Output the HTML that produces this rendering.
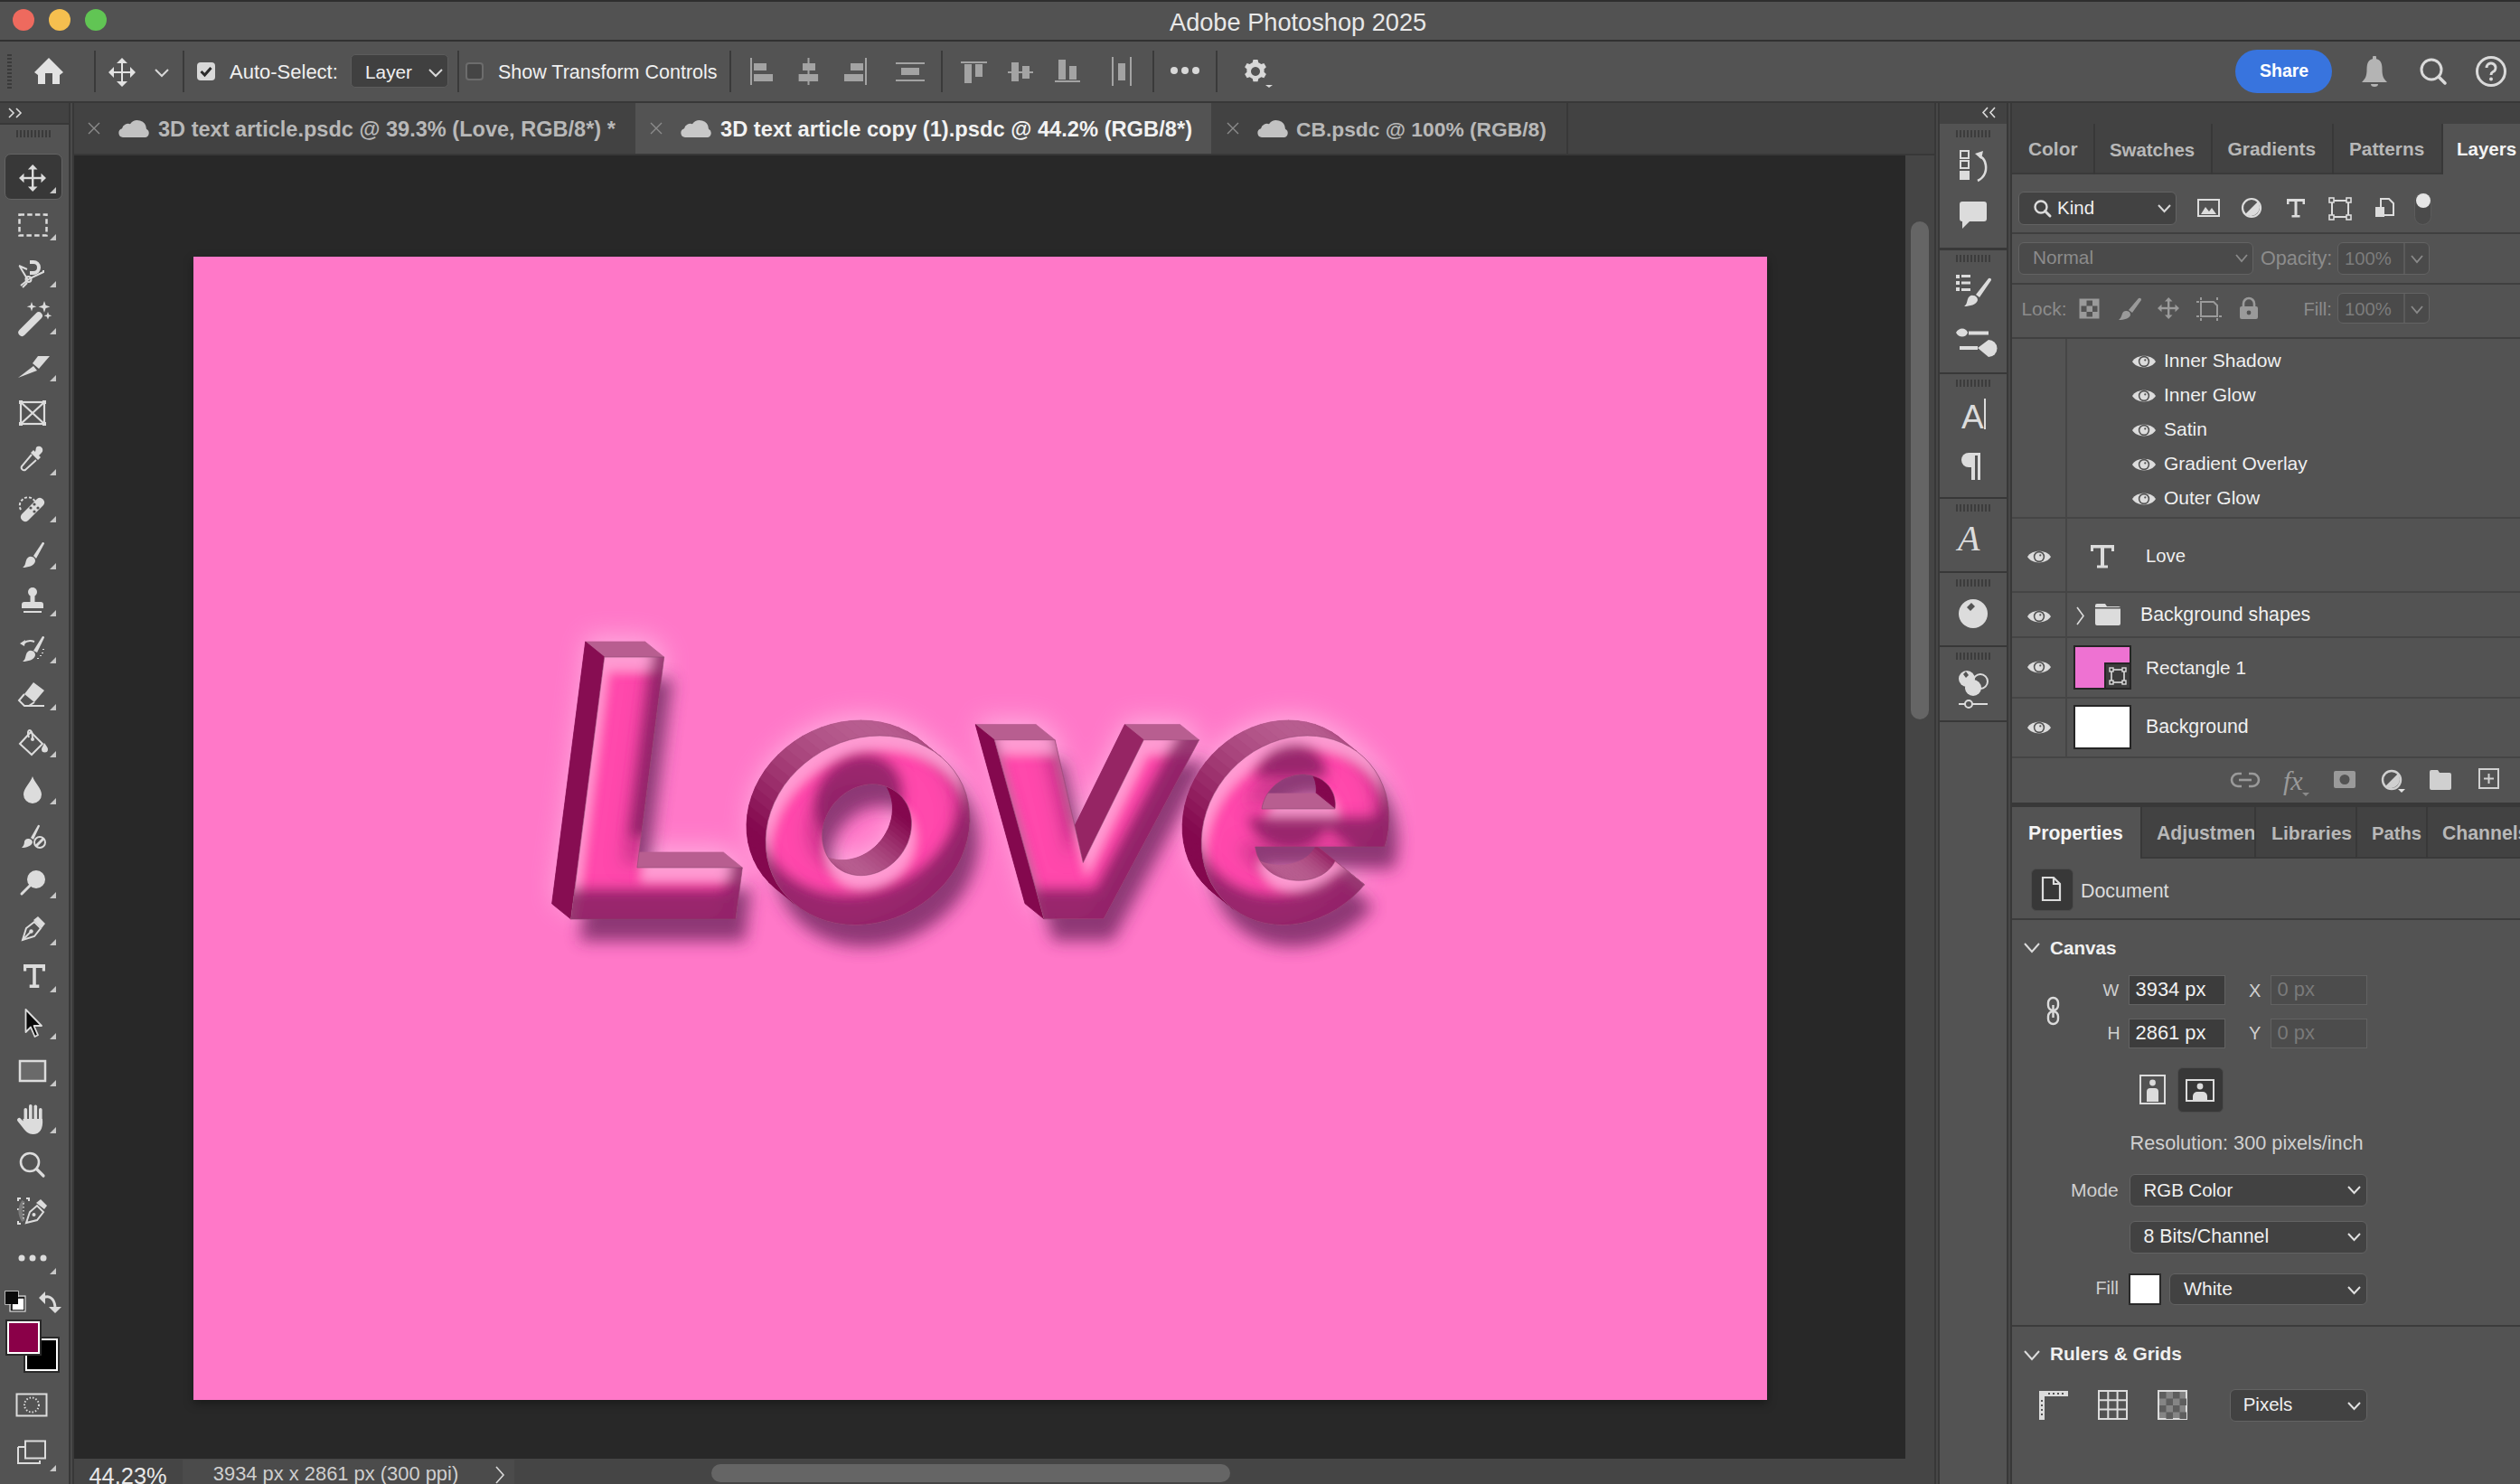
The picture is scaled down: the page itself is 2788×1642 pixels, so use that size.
<!DOCTYPE html>
<html><head><meta charset="utf-8">
<style>
*{box-sizing:border-box;margin:0;padding:0}
html,body{width:2788px;height:1642px;overflow:hidden;background:#535353;font-family:"Liberation Sans",sans-serif;color:#f0f0f0}
.a{position:absolute}
.t{position:absolute;white-space:pre;line-height:1}
svg{position:absolute;overflow:visible}
</style></head><body>
<!-- title bar -->
<div class="a" style="left:0;top:0;width:2788px;height:44px;background:#525252"></div>
<div class="a" style="left:0;top:0;width:2788px;height:2px;background:#2e2e2e"></div>
<div class="a" style="left:0;top:44px;width:2788px;height:2px;background:#313131"></div>
<!-- options bar -->
<div class="a" style="left:0;top:46px;width:2788px;height:66px;background:#535353"></div>
<div class="a" style="left:0;top:112px;width:2788px;height:2px;background:#383838"></div>
<!-- left toolbar -->
<div class="a" style="left:0;top:114px;width:76px;height:1528px;background:#535353"></div>
<div class="a" style="left:0;top:114px;width:76px;height:22px;background:#424242"></div>
<div class="a" style="left:0;top:136px;width:76px;height:2px;background:#383838"></div>
<div class="a" style="left:76px;top:114px;width:2px;height:1528px;background:#383838"></div>
<div class="a" style="left:78px;top:114px;width:2px;height:1528px;background:#4a4a4a"></div>
<div class="a" style="left:80px;top:114px;width:2px;height:1528px;background:#383838"></div>
<!-- tab bar -->
<div class="a" style="left:82px;top:114px;width:2059px;height:56px;background:#424242"></div>
<!-- canvas -->
<div class="a" style="left:82px;top:172px;width:2026px;height:1442px;background:#282828"></div>
<div class="a" style="left:214px;top:284px;width:1741px;height:1265px;background:#ff78c8;box-shadow:0 4px 10px rgba(0,0,0,.35)"></div>
<!--LOVE--><svg style="left:0;top:0" width="2788" height="1642" viewBox="0 0 2788 1642">
<defs>
<filter id="blur8" x="-20%" y="-20%" width="140%" height="140%"><feGaussianBlur stdDeviation="9"/></filter>
<filter id="blur14" x="-20%" y="-20%" width="140%" height="140%"><feGaussianBlur stdDeviation="14"/></filter>
<filter id="bev" x="-5%" y="-5%" width="110%" height="110%">
 <feGaussianBlur in="SourceAlpha" stdDeviation="7" result="b"/>
 <feOffset in="b" dx="-9" dy="-34" result="ob"/>
 <feComposite in="SourceAlpha" in2="ob" operator="out" result="bot"/>
 <feFlood flood-color="#8c2266" flood-opacity="0.92"/><feComposite in2="bot" operator="in" result="botc"/>
 <feGaussianBlur in="SourceAlpha" stdDeviation="6" result="b3"/>
 <feOffset in="b3" dx="4" dy="16" result="ot"/>
 <feComposite in="SourceAlpha" in2="ot" operator="out" result="top"/>
 <feFlood flood-color="#ffa4d8" flood-opacity="0.85"/><feComposite in2="top" operator="in" result="topc"/>
 <feGaussianBlur in="SourceAlpha" stdDeviation="9" result="b4"/>
 <feOffset in="b4" dx="-18" dy="-4" result="orr"/>
 <feComposite in="SourceAlpha" in2="orr" operator="out" result="rgt"/>
 <feFlood flood-color="#a02a74" flood-opacity="0.55"/><feComposite in2="rgt" operator="in" result="rgtc"/>
 <feMerge><feMergeNode in="SourceGraphic"/><feMergeNode in="rgtc"/><feMergeNode in="topc"/><feMergeNode in="botc"/></feMerge>
</filter>
</defs>
<path d="M1417.2,791.5 L1407.0,793.0 L1396.9,795.5 L1386.9,799.0 L1377.2,803.4 L1367.9,808.6 L1359.0,814.8 L1350.6,821.7 L1342.9,829.3 L1335.8,837.5 L1329.5,846.3 L1324.0,855.6 L1319.3,865.3 L1315.6,875.3 L1312.8,885.4 L1311.0,895.7 L1310.2,906.0 L1310.3,916.1 L1311.5,926.1 L1313.7,935.8 L1316.8,945.0 L1320.9,953.9 L1325.9,962.1 L1331.7,969.7 L1338.3,976.6 L1366.6,999.8 L1374.6,1005.0 L1383.2,1009.4 L1392.3,1012.9 L1401.8,1015.4 L1411.6,1016.9 L1421.6,1017.4 L1431.7,1016.9 L1441.9,1015.4 L1452.1,1012.9 L1462.0,1009.4 L1471.7,1005.0 L1481.1,999.8 L1490.0,993.6 L1498.3,986.7 L1506.1,979.1 L1511.5,972.8 L1460.2,931.2 L1534.0,931.0 L1536.2,923.0 L1538.0,912.7 L1538.8,902.4 L1538.6,892.3 L1537.4,882.3 L1535.3,872.6 L1532.1,863.4 L1528.1,854.5 L1523.1,846.3 L1517.3,838.7 L1510.7,831.8 L1503.4,825.7 L1482.3,808.6 L1474.3,803.4 L1465.8,799.0 L1456.7,795.5 L1447.2,793.0 L1437.4,791.5 L1427.4,791.0 L1417.2,791.5Z M1405.0,872.0 L1404.8,871.5 L1408.6,866.7 L1416.8,859.5 L1424.5,855.1 L1432.7,852.3 L1443.4,851.0 L1449.6,851.5 L1454.7,852.6 L1457.5,860.2 L1458.3,866.1 L1457.8,872.0 L1405.0,872.0Z M1396.6,947.3 L1392.8,939.7 L1391.0,931.0 L1457.1,931.2 L1451.8,938.6 L1446.2,943.2 L1439.6,946.8 L1432.4,949.4 L1424.6,950.9 L1412.6,951.0 L1404.6,949.8 L1396.6,947.3Z M1081.2,795.7 L1136.0,993.8 L1157.0,1010.8 L1223.0,1010.8 L1328.6,812.7 L1307.6,795.7 L1246.3,795.7 L1191.1,907.2 L1169.2,812.7 L1148.2,795.7 L1081.2,795.7Z M965.3,791.5 L954.4,791.0 L943.3,791.5 L932.2,793.0 L921.2,795.5 L910.4,799.0 L899.9,803.4 L889.8,808.6 L880.2,814.8 L871.1,821.7 L862.8,829.3 L855.1,837.5 L848.3,846.4 L842.5,855.6 L837.5,865.3 L833.6,875.3 L830.6,885.4 L828.8,895.7 L828.0,906.0 L828.3,916.1 L829.7,926.1 L832.2,935.8 L835.7,945.0 L840.2,953.9 L845.8,962.1 L852.2,969.7 L859.4,976.6 L888.5,999.8 L897.3,1005.0 L906.7,1009.4 L916.6,1012.9 L927.0,1015.4 L937.7,1016.9 L948.6,1017.4 L959.6,1016.9 L970.7,1015.4 L981.7,1012.9 L992.5,1009.4 L1003.0,1005.0 L1013.2,999.8 L1022.8,993.6 L1031.8,986.7 L1040.2,979.1 L1047.8,970.9 L1054.6,962.0 L1060.5,952.8 L1065.5,943.1 L1069.4,933.1 L1072.3,923.0 L1074.2,912.7 L1075.0,902.4 L1074.6,892.3 L1073.2,882.3 L1070.8,872.6 L1067.3,863.4 L1062.7,854.5 L1057.2,846.3 L1050.8,838.7 L1043.5,831.8 L1022.5,814.8 L1014.5,808.6 L1005.7,803.4 L996.3,799.0 L986.4,795.5 L976.0,793.0 L965.3,791.5Z M961.9,937.2 L952.8,941.9 L948.1,943.5 L938.4,945.5 L928.8,945.5 L918.4,943.0 L914.8,936.0 L912.3,926.8 L911.6,917.1 L912.9,907.3 L916.0,897.5 L920.9,888.4 L927.3,880.2 L935.0,873.2 L943.7,867.7 L953.0,863.9 L962.7,861.9 L967.5,861.7 L976.9,862.7 L982.8,864.4 L986.3,871.4 L987.8,875.9 L989.4,885.4 L989.0,895.2 L988.2,900.1 L985.1,909.9 L980.2,919.0 L973.8,927.2 L970.1,930.9 L961.9,937.2Z M612.6,994.0 L633.6,1011.0 L816.0,1011.0 L823.3,954.0 L802.3,937.0 L709.1,936.8 L736.7,721.0 L715.7,704.0 L649.7,704.0 L612.6,994.0Z" fill="#ffb4e2" opacity="0.85" filter="url(#blur14)"/>
<path d="M824.0,1041.0 L831.3,984.0 L714.9,984.0 L744.7,751.0 L678.7,751.0 L641.6,1041.0 L824.0,1041.0Z M1231.0,1040.8 L1336.6,842.7 L1275.3,842.7 L1208.3,978.5 L1177.2,842.7 L1110.2,842.7 L1165.0,1040.8 L1231.0,1040.8Z M1081.2,912.3 L1078.8,902.6 L1075.3,893.3 L1070.7,884.5 L1065.2,876.3 L1058.8,868.7 L1051.5,861.8 L1043.5,855.6 L1034.7,850.4 L1025.3,846.0 L1015.4,842.5 L1005.0,840.0 L994.3,838.5 L983.4,838.0 L972.3,838.5 L961.2,840.0 L950.2,842.5 L939.4,846.0 L928.9,850.4 L918.8,855.6 L909.2,861.8 L900.1,868.7 L891.8,876.3 L884.1,884.5 L877.3,893.3 L871.5,902.6 L866.5,912.3 L862.6,922.3 L859.6,932.4 L857.8,942.7 L857.0,953.0 L857.3,963.1 L858.7,973.1 L861.2,982.8 L864.7,992.1 L869.2,1000.9 L874.7,1009.1 L881.2,1016.7 L888.4,1023.6 L896.5,1029.8 L905.3,1035.0 L914.7,1039.4 L924.6,1042.9 L934.9,1045.4 L945.6,1046.9 L956.6,1047.4 L967.6,1046.9 L978.7,1045.4 L989.7,1042.9 L1000.5,1039.4 L1011.1,1035.0 L1021.2,1029.8 L1030.8,1023.6 L1039.8,1016.7 L1048.2,1009.1 L1055.8,1000.9 L1062.6,992.1 L1068.5,982.8 L1073.5,973.1 L1077.4,963.1 L1080.3,953.0 L1082.2,942.7 L1083.0,932.4 L1082.6,922.3 L1081.2,912.3Z M1014.1,956.9 L1011.8,961.5 L1009.2,966.0 L1006.2,970.3 L1002.8,974.2 L999.1,977.9 L995.1,981.2 L990.9,984.2 L986.4,986.7 L981.8,988.9 L977.1,990.5 L972.3,991.7 L967.4,992.5 L962.6,992.7 L957.8,992.5 L953.1,991.7 L948.6,990.5 L944.3,988.9 L940.2,986.7 L936.4,984.2 L933.0,981.2 L929.8,977.9 L927.1,974.2 L924.7,970.3 L922.8,966.0 L921.3,961.5 L920.3,956.9 L919.7,952.1 L919.6,947.1 L920.0,942.2 L920.9,937.3 L922.2,932.3 L924.0,927.5 L926.2,922.9 L928.9,918.4 L931.9,914.1 L935.3,910.2 L939.0,906.5 L943.0,903.2 L947.2,900.2 L951.6,897.7 L956.3,895.5 L961.0,893.9 L965.8,892.7 L970.7,891.9 L975.5,891.7 L980.3,891.9 L984.9,892.7 L989.5,893.9 L993.8,895.5 L997.8,897.7 L1001.6,900.2 L1005.1,903.2 L1008.3,906.5 L1011.0,910.2 L1013.4,914.1 L1015.3,918.4 L1016.8,922.9 L1017.8,927.5 L1018.4,932.3 L1018.4,937.3 L1018.0,942.2 L1017.2,947.1 L1015.8,952.1 L1014.1,956.9Z M1543.3,902.6 L1540.1,893.3 L1536.1,884.5 L1531.1,876.3 L1525.3,868.7 L1518.7,861.8 L1511.3,855.6 L1503.4,850.4 L1494.8,846.0 L1485.7,842.5 L1476.2,840.0 L1466.4,838.5 L1456.4,838.0 L1446.2,838.5 L1436.0,840.0 L1425.9,842.5 L1415.9,846.0 L1406.2,850.4 L1396.9,855.6 L1388.0,861.8 L1379.6,868.7 L1371.9,876.3 L1364.8,884.5 L1358.5,893.3 L1353.0,902.6 L1348.3,912.3 L1344.6,922.3 L1341.8,932.4 L1340.0,942.7 L1339.2,953.0 L1339.3,963.1 L1340.5,973.1 L1342.7,982.8 L1345.8,992.1 L1349.9,1000.9 L1354.9,1009.1 L1360.7,1016.7 L1367.3,1023.6 L1374.6,1029.8 L1382.6,1035.0 L1391.2,1039.4 L1400.3,1042.9 L1409.7,1045.4 L1419.5,1046.9 L1429.6,1047.4 L1439.7,1046.9 L1449.9,1045.4 L1460.1,1042.9 L1470.0,1039.4 L1479.7,1035.0 L1489.1,1029.8 L1498.0,1023.6 L1506.3,1016.7 L1514.1,1009.1 L1519.5,1002.8 L1487.0,976.7 L1485.3,979.9 L1483.2,982.9 L1480.8,985.6 L1478.1,988.0 L1475.2,990.2 L1472.0,992.2 L1468.6,993.8 L1465.1,995.2 L1461.4,996.4 L1457.6,997.2 L1453.6,997.9 L1449.7,998.2 L1445.6,998.3 L1441.6,998.0 L1437.6,997.6 L1433.6,996.8 L1429.7,995.8 L1425.9,994.4 L1422.2,992.8 L1418.7,991.0 L1415.4,988.8 L1412.3,986.3 L1409.4,983.6 L1406.8,980.6 L1404.5,977.2 L1402.5,973.6 L1400.8,969.7 L1399.6,965.5 L1398.7,961.0 L1542.0,961.0 L1544.2,953.0 L1546.0,942.7 L1546.8,932.4 L1546.6,922.3 L1545.4,912.3 L1543.3,902.6Z M1407.9,911.1 L1408.7,909.2 L1409.5,907.3 L1410.4,905.4 L1411.5,903.5 L1412.6,901.7 L1413.9,900.0 L1415.2,898.3 L1416.6,896.7 L1418.1,895.1 L1419.7,893.6 L1421.3,892.1 L1423.0,890.8 L1424.8,889.5 L1426.6,888.3 L1428.5,887.1 L1430.5,886.1 L1432.5,885.1 L1434.5,884.3 L1436.5,883.5 L1438.6,882.9 L1440.7,882.3 L1442.9,881.8 L1445.0,881.5 L1447.1,881.2 L1449.3,881.1 L1451.4,881.0 L1453.5,881.1 L1455.6,881.2 L1457.7,881.5 L1459.7,881.8 L1461.7,882.3 L1463.7,882.9 L1465.6,883.5 L1467.4,884.3 L1469.2,885.1 L1471.0,886.1 L1472.7,887.1 L1474.3,888.3 L1475.8,889.5 L1477.2,890.8 L1478.6,892.1 L1479.9,893.6 L1481.1,895.1 L1482.1,896.7 L1483.1,898.3 L1484.0,900.0 L1484.8,901.7 L1485.5,903.5 L1486.1,905.4 L1486.5,907.3 L1486.9,909.2 L1487.1,911.1 L1487.3,913.1 L1487.3,915.0 L1487.2,917.0 L1487.0,919.0 L1406.0,919.0 L1406.3,917.0 L1406.7,915.0 L1407.3,913.1 L1407.9,911.1Z" fill="#7a2a66" opacity="0.85" filter="url(#blur8)"/>
<path d="M793.0,1000.0 L800.3,943.0 L683.9,943.0 L713.7,710.0 L647.7,710.0 L610.6,1000.0 L793.0,1000.0Z M1200.0,999.8 L1305.6,801.7 L1244.3,801.7 L1177.3,937.5 L1146.2,801.7 L1079.2,801.7 L1134.0,999.8 L1200.0,999.8Z M1050.2,871.3 L1047.8,861.6 L1044.3,852.3 L1039.7,843.5 L1034.2,835.3 L1027.8,827.7 L1020.5,820.8 L1012.5,814.6 L1003.7,809.4 L994.3,805.0 L984.4,801.5 L974.0,799.0 L963.3,797.5 L952.4,797.0 L941.3,797.5 L930.2,799.0 L919.2,801.5 L908.4,805.0 L897.9,809.4 L887.8,814.6 L878.2,820.8 L869.1,827.7 L860.8,835.3 L853.1,843.5 L846.3,852.3 L840.5,861.6 L835.5,871.3 L831.6,881.3 L828.6,891.4 L826.8,901.7 L826.0,912.0 L826.3,922.1 L827.7,932.1 L830.2,941.8 L833.7,951.1 L838.2,959.9 L843.7,968.1 L850.2,975.7 L857.4,982.6 L865.5,988.8 L874.3,994.0 L883.7,998.4 L893.6,1001.9 L903.9,1004.4 L914.6,1005.9 L925.6,1006.4 L936.6,1005.9 L947.7,1004.4 L958.7,1001.9 L969.5,998.4 L980.1,994.0 L990.2,988.8 L999.8,982.6 L1008.8,975.7 L1017.2,968.1 L1024.8,959.9 L1031.6,951.1 L1037.5,941.8 L1042.5,932.1 L1046.4,922.1 L1049.3,912.0 L1051.2,901.7 L1052.0,891.4 L1051.6,881.3 L1050.2,871.3Z M983.1,915.9 L980.8,920.5 L978.2,925.0 L975.2,929.3 L971.8,933.2 L968.1,936.9 L964.1,940.2 L959.9,943.2 L955.4,945.7 L950.8,947.9 L946.1,949.5 L941.3,950.7 L936.4,951.5 L931.6,951.7 L926.8,951.5 L922.1,950.7 L917.6,949.5 L913.3,947.9 L909.2,945.7 L905.4,943.2 L902.0,940.2 L898.8,936.9 L896.1,933.2 L893.7,929.3 L891.8,925.0 L890.3,920.5 L889.3,915.9 L888.7,911.1 L888.6,906.1 L889.0,901.2 L889.9,896.3 L891.2,891.3 L893.0,886.5 L895.2,881.9 L897.9,877.4 L900.9,873.1 L904.3,869.2 L908.0,865.5 L912.0,862.2 L916.2,859.2 L920.6,856.7 L925.3,854.5 L930.0,852.9 L934.8,851.7 L939.7,850.9 L944.5,850.7 L949.3,850.9 L953.9,851.7 L958.5,852.9 L962.8,854.5 L966.8,856.7 L970.6,859.2 L974.1,862.2 L977.3,865.5 L980.0,869.2 L982.4,873.1 L984.3,877.4 L985.8,881.9 L986.8,886.5 L987.4,891.3 L987.4,896.3 L987.0,901.2 L986.2,906.1 L984.8,911.1 L983.1,915.9Z M1512.3,861.6 L1509.1,852.3 L1505.1,843.5 L1500.1,835.3 L1494.3,827.7 L1487.7,820.8 L1480.3,814.6 L1472.4,809.4 L1463.8,805.0 L1454.7,801.5 L1445.2,799.0 L1435.4,797.5 L1425.4,797.0 L1415.2,797.5 L1405.0,799.0 L1394.9,801.5 L1384.9,805.0 L1375.2,809.4 L1365.9,814.6 L1357.0,820.8 L1348.6,827.7 L1340.9,835.3 L1333.8,843.5 L1327.5,852.3 L1322.0,861.6 L1317.3,871.3 L1313.6,881.3 L1310.8,891.4 L1309.0,901.7 L1308.2,912.0 L1308.3,922.1 L1309.5,932.1 L1311.7,941.8 L1314.8,951.1 L1318.9,959.9 L1323.9,968.1 L1329.7,975.7 L1336.3,982.6 L1343.6,988.8 L1351.6,994.0 L1360.2,998.4 L1369.3,1001.9 L1378.7,1004.4 L1388.5,1005.9 L1398.6,1006.4 L1408.7,1005.9 L1418.9,1004.4 L1429.1,1001.9 L1439.0,998.4 L1448.7,994.0 L1458.1,988.8 L1467.0,982.6 L1475.3,975.7 L1483.1,968.1 L1488.5,961.8 L1456.0,935.7 L1454.3,938.9 L1452.2,941.9 L1449.8,944.6 L1447.1,947.0 L1444.2,949.2 L1441.0,951.2 L1437.6,952.8 L1434.1,954.2 L1430.4,955.4 L1426.6,956.2 L1422.6,956.9 L1418.7,957.2 L1414.6,957.3 L1410.6,957.0 L1406.6,956.6 L1402.6,955.8 L1398.7,954.8 L1394.9,953.4 L1391.2,951.8 L1387.7,950.0 L1384.4,947.8 L1381.3,945.3 L1378.4,942.6 L1375.8,939.6 L1373.5,936.2 L1371.5,932.6 L1369.8,928.7 L1368.6,924.5 L1367.7,920.0 L1511.0,920.0 L1513.2,912.0 L1515.0,901.7 L1515.8,891.4 L1515.6,881.3 L1514.4,871.3 L1512.3,861.6Z M1376.9,870.1 L1377.7,868.2 L1378.5,866.3 L1379.4,864.4 L1380.5,862.5 L1381.6,860.7 L1382.9,859.0 L1384.2,857.3 L1385.6,855.7 L1387.1,854.1 L1388.7,852.6 L1390.3,851.1 L1392.0,849.8 L1393.8,848.5 L1395.6,847.3 L1397.5,846.1 L1399.5,845.1 L1401.5,844.1 L1403.5,843.3 L1405.5,842.5 L1407.6,841.9 L1409.7,841.3 L1411.9,840.8 L1414.0,840.5 L1416.1,840.2 L1418.3,840.1 L1420.4,840.0 L1422.5,840.1 L1424.6,840.2 L1426.7,840.5 L1428.7,840.8 L1430.7,841.3 L1432.7,841.9 L1434.6,842.5 L1436.4,843.3 L1438.2,844.1 L1440.0,845.1 L1441.7,846.1 L1443.3,847.3 L1444.8,848.5 L1446.2,849.8 L1447.6,851.1 L1448.9,852.6 L1450.1,854.1 L1451.1,855.7 L1452.1,857.3 L1453.0,859.0 L1453.8,860.7 L1454.5,862.5 L1455.1,864.4 L1455.5,866.3 L1455.9,868.2 L1456.1,870.1 L1456.3,872.1 L1456.3,874.0 L1456.2,876.0 L1456.0,878.0 L1375.0,878.0 L1375.3,876.0 L1375.7,874.0 L1376.3,872.1 L1376.9,870.1Z" fill="#9a3a74"/>
<path d="M821.3,960.0 L704.9,960.0 L683.9,943.0 L800.3,943.0Z" fill="#b85e90" stroke="#b85e90" stroke-width="0.8"/><path d="M734.7,727.0 L668.7,727.0 L647.7,710.0 L713.7,710.0Z" fill="#b85e90" stroke="#b85e90" stroke-width="0.8"/><path d="M668.7,727.0 L631.6,1017.0 L610.6,1000.0 L647.7,710.0Z" fill="#870d52" stroke="#870d52" stroke-width="0.8"/><path d="M1326.6,818.7 L1265.3,818.7 L1244.3,801.7 L1305.6,801.7Z" fill="#b85e90" stroke="#b85e90" stroke-width="0.8"/><path d="M1265.3,818.7 L1198.3,954.5 L1177.3,937.5 L1244.3,801.7Z" fill="#962564" stroke="#962564" stroke-width="0.8"/><path d="M1167.2,818.7 L1100.2,818.7 L1079.2,801.7 L1146.2,801.7Z" fill="#b85e90" stroke="#b85e90" stroke-width="0.8"/><path d="M1100.2,818.7 L1155.0,1016.8 L1134.0,999.8 L1079.2,801.7Z" fill="#84084e" stroke="#84084e" stroke-width="0.8"/><path d="M1041.5,837.8 L1033.5,831.6 L1012.5,814.6 L1020.5,820.8Z" fill="#aa477f" stroke="#aa477f" stroke-width="0.8"/><path d="M1033.5,831.6 L1024.7,826.4 L1003.7,809.4 L1012.5,814.6Z" fill="#ae4e83" stroke="#ae4e83" stroke-width="0.8"/><path d="M1024.7,826.4 L1015.3,822.0 L994.3,805.0 L1003.7,809.4Z" fill="#b15388" stroke="#b15388" stroke-width="0.8"/><path d="M1015.3,822.0 L1005.4,818.5 L984.4,801.5 L994.3,805.0Z" fill="#b4578b" stroke="#b4578b" stroke-width="0.8"/><path d="M1005.4,818.5 L995.0,816.0 L974.0,799.0 L984.4,801.5Z" fill="#b65a8d" stroke="#b65a8d" stroke-width="0.8"/><path d="M995.0,816.0 L984.3,814.5 L963.3,797.5 L974.0,799.0Z" fill="#b75c8f" stroke="#b75c8f" stroke-width="0.8"/><path d="M984.3,814.5 L973.4,814.0 L952.4,797.0 L963.3,797.5Z" fill="#b75d8f" stroke="#b75d8f" stroke-width="0.8"/><path d="M973.4,814.0 L962.3,814.5 L941.3,797.5 L952.4,797.0Z" fill="#b75d8f" stroke="#b75d8f" stroke-width="0.8"/><path d="M962.3,814.5 L951.2,816.0 L930.2,799.0 L941.3,797.5Z" fill="#b75c8f" stroke="#b75c8f" stroke-width="0.8"/><path d="M951.2,816.0 L940.2,818.5 L919.2,801.5 L930.2,799.0Z" fill="#b65b8d" stroke="#b65b8d" stroke-width="0.8"/><path d="M940.2,818.5 L929.4,822.0 L908.4,805.0 L919.2,801.5Z" fill="#b4588b" stroke="#b4588b" stroke-width="0.8"/><path d="M929.4,822.0 L918.9,826.4 L897.9,809.4 L908.4,805.0Z" fill="#b25589" stroke="#b25589" stroke-width="0.8"/><path d="M918.9,826.4 L908.8,831.6 L887.8,814.6 L897.9,809.4Z" fill="#b05186" stroke="#b05186" stroke-width="0.8"/><path d="M908.8,831.6 L899.2,837.8 L878.2,820.8 L887.8,814.6Z" fill="#ad4c82" stroke="#ad4c82" stroke-width="0.8"/><path d="M899.2,837.8 L890.1,844.7 L869.1,827.7 L878.2,820.8Z" fill="#aa477e" stroke="#aa477e" stroke-width="0.8"/><path d="M890.1,844.7 L881.8,852.3 L860.8,835.3 L869.1,827.7Z" fill="#a7427a" stroke="#a7427a" stroke-width="0.8"/><path d="M881.8,852.3 L874.1,860.5 L853.1,843.5 L860.8,835.3Z" fill="#a33b75" stroke="#a33b75" stroke-width="0.8"/><path d="M874.1,860.5 L867.3,869.3 L846.3,852.3 L853.1,843.5Z" fill="#9f3570" stroke="#9f3570" stroke-width="0.8"/><path d="M867.3,869.3 L861.5,878.6 L840.5,861.6 L846.3,852.3Z" fill="#9b2e6b" stroke="#9b2e6b" stroke-width="0.8"/><path d="M861.5,878.6 L856.5,888.3 L835.5,871.3 L840.5,861.6Z" fill="#962665" stroke="#962665" stroke-width="0.8"/><path d="M856.5,888.3 L852.6,898.3 L831.6,881.3 L835.5,871.3Z" fill="#921f60" stroke="#921f60" stroke-width="0.8"/><path d="M852.6,898.3 L849.6,908.4 L828.6,891.4 L831.6,881.3Z" fill="#8d185a" stroke="#8d185a" stroke-width="0.8"/><path d="M849.6,908.4 L847.8,918.7 L826.8,901.7 L828.6,891.4Z" fill="#891154" stroke="#891154" stroke-width="0.8"/><path d="M847.8,918.7 L847.0,929.0 L826.0,912.0 L826.8,901.7Z" fill="#850a50" stroke="#850a50" stroke-width="0.8"/><path d="M847.0,929.0 L847.3,939.1 L826.3,922.1 L826.0,912.0Z" fill="#84084e" stroke="#84084e" stroke-width="0.8"/><path d="M847.3,939.1 L848.7,949.1 L827.7,932.1 L826.3,922.1Z" fill="#84084e" stroke="#84084e" stroke-width="0.8"/><path d="M848.7,949.1 L851.2,958.8 L830.2,941.8 L827.7,932.1Z" fill="#84084e" stroke="#84084e" stroke-width="0.8"/><path d="M851.2,958.8 L854.7,968.1 L833.7,951.1 L830.2,941.8Z" fill="#84084e" stroke="#84084e" stroke-width="0.8"/><path d="M854.7,968.1 L859.2,976.9 L838.2,959.9 L833.7,951.1Z" fill="#84084e" stroke="#84084e" stroke-width="0.8"/><path d="M859.2,976.9 L864.7,985.1 L843.7,968.1 L838.2,959.9Z" fill="#84084e" stroke="#84084e" stroke-width="0.8"/><path d="M864.7,985.1 L871.2,992.7 L850.2,975.7 L843.7,968.1Z" fill="#84084e" stroke="#84084e" stroke-width="0.8"/><path d="M871.2,992.7 L878.4,999.6 L857.4,982.6 L850.2,975.7Z" fill="#84084e" stroke="#84084e" stroke-width="0.8"/><path d="M1004.1,932.9 L1001.8,937.5 L980.8,920.5 L983.1,915.9Z" fill="#952463" stroke="#952463" stroke-width="0.8"/><path d="M1001.8,937.5 L999.2,942.0 L978.2,925.0 L980.8,920.5Z" fill="#992b69" stroke="#992b69" stroke-width="0.8"/><path d="M999.2,942.0 L996.2,946.3 L975.2,929.3 L978.2,925.0Z" fill="#9d326e" stroke="#9d326e" stroke-width="0.8"/><path d="M996.2,946.3 L992.8,950.2 L971.8,933.2 L975.2,929.3Z" fill="#a13873" stroke="#a13873" stroke-width="0.8"/><path d="M992.8,950.2 L989.1,953.9 L968.1,936.9 L971.8,933.2Z" fill="#a53f78" stroke="#a53f78" stroke-width="0.8"/><path d="M989.1,953.9 L985.1,957.2 L964.1,940.2 L968.1,936.9Z" fill="#a8457c" stroke="#a8457c" stroke-width="0.8"/><path d="M985.1,957.2 L980.9,960.2 L959.9,943.2 L964.1,940.2Z" fill="#ac4a81" stroke="#ac4a81" stroke-width="0.8"/><path d="M980.9,960.2 L976.4,962.7 L955.4,945.7 L959.9,943.2Z" fill="#af4f84" stroke="#af4f84" stroke-width="0.8"/><path d="M976.4,962.7 L971.8,964.9 L950.8,947.9 L955.4,945.7Z" fill="#b15388" stroke="#b15388" stroke-width="0.8"/><path d="M971.8,964.9 L967.1,966.5 L946.1,949.5 L950.8,947.9Z" fill="#b4578b" stroke="#b4578b" stroke-width="0.8"/><path d="M967.1,966.5 L962.3,967.7 L941.3,950.7 L946.1,949.5Z" fill="#b55a8d" stroke="#b55a8d" stroke-width="0.8"/><path d="M962.3,967.7 L957.4,968.5 L936.4,951.5 L941.3,950.7Z" fill="#b75c8f" stroke="#b75c8f" stroke-width="0.8"/><path d="M957.4,968.5 L952.6,968.7 L931.6,951.7 L936.4,951.5Z" fill="#b75d8f" stroke="#b75d8f" stroke-width="0.8"/><path d="M952.6,968.7 L947.8,968.5 L926.8,951.5 L931.6,951.7Z" fill="#b75d8f" stroke="#b75d8f" stroke-width="0.8"/><path d="M947.8,968.5 L943.1,967.7 L922.1,950.7 L926.8,951.5Z" fill="#b75c8e" stroke="#b75c8e" stroke-width="0.8"/><path d="M943.1,967.7 L938.6,966.5 L917.6,949.5 L922.1,950.7Z" fill="#b55a8d" stroke="#b55a8d" stroke-width="0.8"/><path d="M938.6,966.5 L934.3,964.9 L913.3,947.9 L917.6,949.5Z" fill="#b3568a" stroke="#b3568a" stroke-width="0.8"/><path d="M934.3,964.9 L930.2,962.7 L909.2,945.7 L913.3,947.9Z" fill="#b05186" stroke="#b05186" stroke-width="0.8"/><path d="M930.2,962.7 L926.4,960.2 L905.4,943.2 L909.2,945.7Z" fill="#ac4b81" stroke="#ac4b81" stroke-width="0.8"/><path d="M991.6,876.2 L995.1,879.2 L974.1,862.2 L970.6,859.2Z" fill="#84084e" stroke="#84084e" stroke-width="0.8"/><path d="M995.1,879.2 L998.3,882.5 L977.3,865.5 L974.1,862.2Z" fill="#84084e" stroke="#84084e" stroke-width="0.8"/><path d="M998.3,882.5 L1001.0,886.2 L980.0,869.2 L977.3,865.5Z" fill="#84084e" stroke="#84084e" stroke-width="0.8"/><path d="M1001.0,886.2 L1003.4,890.1 L982.4,873.1 L980.0,869.2Z" fill="#84084e" stroke="#84084e" stroke-width="0.8"/><path d="M1003.4,890.1 L1005.3,894.4 L984.3,877.4 L982.4,873.1Z" fill="#84084e" stroke="#84084e" stroke-width="0.8"/><path d="M1005.3,894.4 L1006.8,898.9 L985.8,881.9 L984.3,877.4Z" fill="#84084e" stroke="#84084e" stroke-width="0.8"/><path d="M1006.8,898.9 L1007.8,903.5 L986.8,886.5 L985.8,881.9Z" fill="#84084e" stroke="#84084e" stroke-width="0.8"/><path d="M1007.8,903.5 L1008.4,908.3 L987.4,891.3 L986.8,886.5Z" fill="#84084e" stroke="#84084e" stroke-width="0.8"/><path d="M1008.4,908.3 L1008.4,913.3 L987.4,896.3 L987.4,891.3Z" fill="#84084e" stroke="#84084e" stroke-width="0.8"/><path d="M1008.4,913.3 L1008.0,918.2 L987.0,901.2 L987.4,896.3Z" fill="#850b50" stroke="#850b50" stroke-width="0.8"/><path d="M1008.0,918.2 L1007.2,923.1 L986.2,906.1 L987.0,901.2Z" fill="#891054" stroke="#891054" stroke-width="0.8"/><path d="M1007.2,923.1 L1005.8,928.1 L984.8,911.1 L986.2,906.1Z" fill="#8d1759" stroke="#8d1759" stroke-width="0.8"/><path d="M1005.8,928.1 L1004.1,932.9 L983.1,915.9 L984.8,911.1Z" fill="#911d5e" stroke="#911d5e" stroke-width="0.8"/><path d="M1501.3,831.6 L1493.4,826.4 L1472.4,809.4 L1480.3,814.6Z" fill="#ad4b82" stroke="#ad4b82" stroke-width="0.8"/><path d="M1493.4,826.4 L1484.8,822.0 L1463.8,805.0 L1472.4,809.4Z" fill="#b05186" stroke="#b05186" stroke-width="0.8"/><path d="M1484.8,822.0 L1475.7,818.5 L1454.7,801.5 L1463.8,805.0Z" fill="#b3568a" stroke="#b3568a" stroke-width="0.8"/><path d="M1475.7,818.5 L1466.2,816.0 L1445.2,799.0 L1454.7,801.5Z" fill="#b55a8d" stroke="#b55a8d" stroke-width="0.8"/><path d="M1466.2,816.0 L1456.4,814.5 L1435.4,797.5 L1445.2,799.0Z" fill="#b75c8f" stroke="#b75c8f" stroke-width="0.8"/><path d="M1456.4,814.5 L1446.4,814.0 L1425.4,797.0 L1435.4,797.5Z" fill="#b75d8f" stroke="#b75d8f" stroke-width="0.8"/><path d="M1446.4,814.0 L1436.2,814.5 L1415.2,797.5 L1425.4,797.0Z" fill="#b75d8f" stroke="#b75d8f" stroke-width="0.8"/><path d="M1436.2,814.5 L1426.0,816.0 L1405.0,799.0 L1415.2,797.5Z" fill="#b75c8f" stroke="#b75c8f" stroke-width="0.8"/><path d="M1426.0,816.0 L1415.9,818.5 L1394.9,801.5 L1405.0,799.0Z" fill="#b65a8d" stroke="#b65a8d" stroke-width="0.8"/><path d="M1415.9,818.5 L1405.9,822.0 L1384.9,805.0 L1394.9,801.5Z" fill="#b4578b" stroke="#b4578b" stroke-width="0.8"/><path d="M1405.9,822.0 L1396.2,826.4 L1375.2,809.4 L1384.9,805.0Z" fill="#b25488" stroke="#b25488" stroke-width="0.8"/><path d="M1396.2,826.4 L1386.9,831.6 L1365.9,814.6 L1375.2,809.4Z" fill="#af4f85" stroke="#af4f85" stroke-width="0.8"/><path d="M1386.9,831.6 L1378.0,837.8 L1357.0,820.8 L1365.9,814.6Z" fill="#ac4a81" stroke="#ac4a81" stroke-width="0.8"/><path d="M1378.0,837.8 L1369.6,844.7 L1348.6,827.7 L1357.0,820.8Z" fill="#a9457d" stroke="#a9457d" stroke-width="0.8"/><path d="M1369.6,844.7 L1361.9,852.3 L1340.9,835.3 L1348.6,827.7Z" fill="#a53f78" stroke="#a53f78" stroke-width="0.8"/><path d="M1361.9,852.3 L1354.8,860.5 L1333.8,843.5 L1340.9,835.3Z" fill="#a13973" stroke="#a13973" stroke-width="0.8"/><path d="M1354.8,860.5 L1348.5,869.3 L1327.5,852.3 L1333.8,843.5Z" fill="#9d326e" stroke="#9d326e" stroke-width="0.8"/><path d="M1348.5,869.3 L1343.0,878.6 L1322.0,861.6 L1327.5,852.3Z" fill="#992b69" stroke="#992b69" stroke-width="0.8"/><path d="M1343.0,878.6 L1338.3,888.3 L1317.3,871.3 L1322.0,861.6Z" fill="#952464" stroke="#952464" stroke-width="0.8"/><path d="M1338.3,888.3 L1334.6,898.3 L1313.6,881.3 L1317.3,871.3Z" fill="#911e5e" stroke="#911e5e" stroke-width="0.8"/><path d="M1334.6,898.3 L1331.8,908.4 L1310.8,891.4 L1313.6,881.3Z" fill="#8d1759" stroke="#8d1759" stroke-width="0.8"/><path d="M1331.8,908.4 L1330.0,918.7 L1309.0,901.7 L1310.8,891.4Z" fill="#891054" stroke="#891054" stroke-width="0.8"/><path d="M1330.0,918.7 L1329.2,929.0 L1308.2,912.0 L1309.0,901.7Z" fill="#850b50" stroke="#850b50" stroke-width="0.8"/><path d="M1329.2,929.0 L1329.3,939.1 L1308.3,922.1 L1308.2,912.0Z" fill="#84084e" stroke="#84084e" stroke-width="0.8"/><path d="M1329.3,939.1 L1330.5,949.1 L1309.5,932.1 L1308.3,922.1Z" fill="#84084e" stroke="#84084e" stroke-width="0.8"/><path d="M1330.5,949.1 L1332.7,958.8 L1311.7,941.8 L1309.5,932.1Z" fill="#84084e" stroke="#84084e" stroke-width="0.8"/><path d="M1332.7,958.8 L1335.8,968.1 L1314.8,951.1 L1311.7,941.8Z" fill="#84084e" stroke="#84084e" stroke-width="0.8"/><path d="M1335.8,968.1 L1339.9,976.9 L1318.9,959.9 L1314.8,951.1Z" fill="#84084e" stroke="#84084e" stroke-width="0.8"/><path d="M1339.9,976.9 L1344.9,985.1 L1323.9,968.1 L1318.9,959.9Z" fill="#84084e" stroke="#84084e" stroke-width="0.8"/><path d="M1344.9,985.1 L1350.7,992.7 L1329.7,975.7 L1323.9,968.1Z" fill="#84084e" stroke="#84084e" stroke-width="0.8"/><path d="M1350.7,992.7 L1357.3,999.6 L1336.3,982.6 L1329.7,975.7Z" fill="#84084e" stroke="#84084e" stroke-width="0.8"/><path d="M1357.3,999.6 L1364.6,1005.8 L1343.6,988.8 L1336.3,982.6Z" fill="#84084e" stroke="#84084e" stroke-width="0.8"/><path d="M1509.5,978.8 L1477.0,952.7 L1456.0,935.7 L1488.5,961.8Z" fill="#a9467d" stroke="#a9467d" stroke-width="0.8"/><path d="M1477.0,952.7 L1475.3,955.9 L1454.3,938.9 L1456.0,935.7Z" fill="#972867" stroke="#972867" stroke-width="0.8"/><path d="M1475.3,955.9 L1473.2,958.9 L1452.2,941.9 L1454.3,938.9Z" fill="#9d316e" stroke="#9d316e" stroke-width="0.8"/><path d="M1473.2,958.9 L1470.8,961.6 L1449.8,944.6 L1452.2,941.9Z" fill="#a23a74" stroke="#a23a74" stroke-width="0.8"/><path d="M1470.8,961.6 L1468.1,964.0 L1447.1,947.0 L1449.8,944.6Z" fill="#a7417a" stroke="#a7417a" stroke-width="0.8"/><path d="M1468.1,964.0 L1465.2,966.2 L1444.2,949.2 L1447.1,947.0Z" fill="#ab487f" stroke="#ab487f" stroke-width="0.8"/><path d="M1465.2,966.2 L1462.0,968.2 L1441.0,951.2 L1444.2,949.2Z" fill="#ae4e83" stroke="#ae4e83" stroke-width="0.8"/><path d="M1462.0,968.2 L1458.6,969.8 L1437.6,952.8 L1441.0,951.2Z" fill="#b15287" stroke="#b15287" stroke-width="0.8"/><path d="M1458.6,969.8 L1455.1,971.2 L1434.1,954.2 L1437.6,952.8Z" fill="#b3568a" stroke="#b3568a" stroke-width="0.8"/><path d="M1455.1,971.2 L1451.4,972.4 L1430.4,955.4 L1434.1,954.2Z" fill="#b5598c" stroke="#b5598c" stroke-width="0.8"/><path d="M1451.4,972.4 L1447.6,973.2 L1426.6,956.2 L1430.4,955.4Z" fill="#b65b8d" stroke="#b65b8d" stroke-width="0.8"/><path d="M1447.6,973.2 L1443.6,973.9 L1422.6,956.9 L1426.6,956.2Z" fill="#b75c8e" stroke="#b75c8e" stroke-width="0.8"/><path d="M1443.6,973.9 L1439.7,974.2 L1418.7,957.2 L1422.6,956.9Z" fill="#b75d8f" stroke="#b75d8f" stroke-width="0.8"/><path d="M1439.7,974.2 L1435.6,974.3 L1414.6,957.3 L1418.7,957.2Z" fill="#b75d8f" stroke="#b75d8f" stroke-width="0.8"/><path d="M1435.6,974.3 L1431.6,974.0 L1410.6,957.0 L1414.6,957.3Z" fill="#b75d8f" stroke="#b75d8f" stroke-width="0.8"/><path d="M1431.6,974.0 L1427.6,973.6 L1406.6,956.6 L1410.6,957.0Z" fill="#b75d8f" stroke="#b75d8f" stroke-width="0.8"/><path d="M1427.6,973.6 L1423.6,972.8 L1402.6,955.8 L1406.6,956.6Z" fill="#b65c8e" stroke="#b65c8e" stroke-width="0.8"/><path d="M1423.6,972.8 L1419.7,971.8 L1398.7,954.8 L1402.6,955.8Z" fill="#b55a8d" stroke="#b55a8d" stroke-width="0.8"/><path d="M1419.7,971.8 L1415.9,970.4 L1394.9,953.4 L1398.7,954.8Z" fill="#b4578b" stroke="#b4578b" stroke-width="0.8"/><path d="M1415.9,970.4 L1412.2,968.8 L1391.2,951.8 L1394.9,953.4Z" fill="#b25488" stroke="#b25488" stroke-width="0.8"/><path d="M1412.2,968.8 L1408.7,967.0 L1387.7,950.0 L1391.2,951.8Z" fill="#b05086" stroke="#b05086" stroke-width="0.8"/><path d="M1408.7,967.0 L1405.4,964.8 L1384.4,947.8 L1387.7,950.0Z" fill="#ad4c82" stroke="#ad4c82" stroke-width="0.8"/><path d="M1405.4,964.8 L1402.3,962.3 L1381.3,945.3 L1384.4,947.8Z" fill="#aa467e" stroke="#aa467e" stroke-width="0.8"/><path d="M1465.8,865.5 L1467.2,866.8 L1446.2,849.8 L1444.8,848.5Z" fill="#84084e" stroke="#84084e" stroke-width="0.8"/><path d="M1467.2,866.8 L1468.6,868.1 L1447.6,851.1 L1446.2,849.8Z" fill="#84084e" stroke="#84084e" stroke-width="0.8"/><path d="M1468.6,868.1 L1469.9,869.6 L1448.9,852.6 L1447.6,851.1Z" fill="#84084e" stroke="#84084e" stroke-width="0.8"/><path d="M1469.9,869.6 L1471.1,871.1 L1450.1,854.1 L1448.9,852.6Z" fill="#84084e" stroke="#84084e" stroke-width="0.8"/><path d="M1471.1,871.1 L1472.1,872.7 L1451.1,855.7 L1450.1,854.1Z" fill="#84084e" stroke="#84084e" stroke-width="0.8"/><path d="M1472.1,872.7 L1473.1,874.3 L1452.1,857.3 L1451.1,855.7Z" fill="#84084e" stroke="#84084e" stroke-width="0.8"/><path d="M1473.1,874.3 L1474.0,876.0 L1453.0,859.0 L1452.1,857.3Z" fill="#84084e" stroke="#84084e" stroke-width="0.8"/><path d="M1474.0,876.0 L1474.8,877.7 L1453.8,860.7 L1453.0,859.0Z" fill="#84084e" stroke="#84084e" stroke-width="0.8"/><path d="M1474.8,877.7 L1475.5,879.5 L1454.5,862.5 L1453.8,860.7Z" fill="#84084e" stroke="#84084e" stroke-width="0.8"/><path d="M1475.5,879.5 L1476.1,881.4 L1455.1,864.4 L1454.5,862.5Z" fill="#84084e" stroke="#84084e" stroke-width="0.8"/><path d="M1476.1,881.4 L1476.5,883.3 L1455.5,866.3 L1455.1,864.4Z" fill="#84084e" stroke="#84084e" stroke-width="0.8"/><path d="M1476.5,883.3 L1476.9,885.2 L1455.9,868.2 L1455.5,866.3Z" fill="#84084e" stroke="#84084e" stroke-width="0.8"/><path d="M1476.9,885.2 L1477.1,887.1 L1456.1,870.1 L1455.9,868.2Z" fill="#84084e" stroke="#84084e" stroke-width="0.8"/><path d="M1477.1,887.1 L1477.3,889.1 L1456.3,872.1 L1456.1,870.1Z" fill="#84084e" stroke="#84084e" stroke-width="0.8"/><path d="M1477.3,889.1 L1477.3,891.0 L1456.3,874.0 L1456.3,872.1Z" fill="#84084e" stroke="#84084e" stroke-width="0.8"/><path d="M1477.3,891.0 L1477.2,893.0 L1456.2,876.0 L1456.3,874.0Z" fill="#84094f" stroke="#84094f" stroke-width="0.8"/><path d="M1477.2,893.0 L1477.0,895.0 L1456.0,878.0 L1456.2,876.0Z" fill="#860c51" stroke="#860c51" stroke-width="0.8"/><path d="M1477.0,895.0 L1396.0,895.0 L1375.0,878.0 L1456.0,878.0Z" fill="#b85e90" stroke="#b85e90" stroke-width="0.8"/>
<path d="M814.0,1017.0 L821.3,960.0 L704.9,960.0 L734.7,727.0 L668.7,727.0 L631.6,1017.0 L814.0,1017.0Z M1221.0,1016.8 L1326.6,818.7 L1265.3,818.7 L1198.3,954.5 L1167.2,818.7 L1100.2,818.7 L1155.0,1016.8 L1221.0,1016.8Z M1071.2,888.3 L1068.8,878.6 L1065.3,869.3 L1060.7,860.5 L1055.2,852.3 L1048.8,844.7 L1041.5,837.8 L1033.5,831.6 L1024.7,826.4 L1015.3,822.0 L1005.4,818.5 L995.0,816.0 L984.3,814.5 L973.4,814.0 L962.3,814.5 L951.2,816.0 L940.2,818.5 L929.4,822.0 L918.9,826.4 L908.8,831.6 L899.2,837.8 L890.1,844.7 L881.8,852.3 L874.1,860.5 L867.3,869.3 L861.5,878.6 L856.5,888.3 L852.6,898.3 L849.6,908.4 L847.8,918.7 L847.0,929.0 L847.3,939.1 L848.7,949.1 L851.2,958.8 L854.7,968.1 L859.2,976.9 L864.7,985.1 L871.2,992.7 L878.4,999.6 L886.5,1005.8 L895.3,1011.0 L904.7,1015.4 L914.6,1018.9 L924.9,1021.4 L935.6,1022.9 L946.6,1023.4 L957.6,1022.9 L968.7,1021.4 L979.7,1018.9 L990.5,1015.4 L1001.1,1011.0 L1011.2,1005.8 L1020.8,999.6 L1029.8,992.7 L1038.2,985.1 L1045.8,976.9 L1052.6,968.1 L1058.5,958.8 L1063.5,949.1 L1067.4,939.1 L1070.3,929.0 L1072.2,918.7 L1073.0,908.4 L1072.6,898.3 L1071.2,888.3Z M1004.1,932.9 L1001.8,937.5 L999.2,942.0 L996.2,946.3 L992.8,950.2 L989.1,953.9 L985.1,957.2 L980.9,960.2 L976.4,962.7 L971.8,964.9 L967.1,966.5 L962.3,967.7 L957.4,968.5 L952.6,968.7 L947.8,968.5 L943.1,967.7 L938.6,966.5 L934.3,964.9 L930.2,962.7 L926.4,960.2 L923.0,957.2 L919.8,953.9 L917.1,950.2 L914.7,946.3 L912.8,942.0 L911.3,937.5 L910.3,932.9 L909.7,928.1 L909.6,923.1 L910.0,918.2 L910.9,913.3 L912.2,908.3 L914.0,903.5 L916.2,898.9 L918.9,894.4 L921.9,890.1 L925.3,886.2 L929.0,882.5 L933.0,879.2 L937.2,876.2 L941.6,873.7 L946.3,871.5 L951.0,869.9 L955.8,868.7 L960.7,867.9 L965.5,867.7 L970.3,867.9 L974.9,868.7 L979.5,869.9 L983.8,871.5 L987.8,873.7 L991.6,876.2 L995.1,879.2 L998.3,882.5 L1001.0,886.2 L1003.4,890.1 L1005.3,894.4 L1006.8,898.9 L1007.8,903.5 L1008.4,908.3 L1008.4,913.3 L1008.0,918.2 L1007.2,923.1 L1005.8,928.1 L1004.1,932.9Z M1533.3,878.6 L1530.1,869.3 L1526.1,860.5 L1521.1,852.3 L1515.3,844.7 L1508.7,837.8 L1501.3,831.6 L1493.4,826.4 L1484.8,822.0 L1475.7,818.5 L1466.2,816.0 L1456.4,814.5 L1446.4,814.0 L1436.2,814.5 L1426.0,816.0 L1415.9,818.5 L1405.9,822.0 L1396.2,826.4 L1386.9,831.6 L1378.0,837.8 L1369.6,844.7 L1361.9,852.3 L1354.8,860.5 L1348.5,869.3 L1343.0,878.6 L1338.3,888.3 L1334.6,898.3 L1331.8,908.4 L1330.0,918.7 L1329.2,929.0 L1329.3,939.1 L1330.5,949.1 L1332.7,958.8 L1335.8,968.1 L1339.9,976.9 L1344.9,985.1 L1350.7,992.7 L1357.3,999.6 L1364.6,1005.8 L1372.6,1011.0 L1381.2,1015.4 L1390.3,1018.9 L1399.7,1021.4 L1409.5,1022.9 L1419.6,1023.4 L1429.7,1022.9 L1439.9,1021.4 L1450.1,1018.9 L1460.0,1015.4 L1469.7,1011.0 L1479.1,1005.8 L1488.0,999.6 L1496.3,992.7 L1504.1,985.1 L1509.5,978.8 L1477.0,952.7 L1475.3,955.9 L1473.2,958.9 L1470.8,961.6 L1468.1,964.0 L1465.2,966.2 L1462.0,968.2 L1458.6,969.8 L1455.1,971.2 L1451.4,972.4 L1447.6,973.2 L1443.6,973.9 L1439.7,974.2 L1435.6,974.3 L1431.6,974.0 L1427.6,973.6 L1423.6,972.8 L1419.7,971.8 L1415.9,970.4 L1412.2,968.8 L1408.7,967.0 L1405.4,964.8 L1402.3,962.3 L1399.4,959.6 L1396.8,956.6 L1394.5,953.2 L1392.5,949.6 L1390.8,945.7 L1389.6,941.5 L1388.7,937.0 L1532.0,937.0 L1534.2,929.0 L1536.0,918.7 L1536.8,908.4 L1536.6,898.3 L1535.4,888.3 L1533.3,878.6Z M1397.9,887.1 L1398.7,885.2 L1399.5,883.3 L1400.4,881.4 L1401.5,879.5 L1402.6,877.7 L1403.9,876.0 L1405.2,874.3 L1406.6,872.7 L1408.1,871.1 L1409.7,869.6 L1411.3,868.1 L1413.0,866.8 L1414.8,865.5 L1416.6,864.3 L1418.5,863.1 L1420.5,862.1 L1422.5,861.1 L1424.5,860.3 L1426.5,859.5 L1428.6,858.9 L1430.7,858.3 L1432.9,857.8 L1435.0,857.5 L1437.1,857.2 L1439.3,857.1 L1441.4,857.0 L1443.5,857.1 L1445.6,857.2 L1447.7,857.5 L1449.7,857.8 L1451.7,858.3 L1453.7,858.9 L1455.6,859.5 L1457.4,860.3 L1459.2,861.1 L1461.0,862.1 L1462.7,863.1 L1464.3,864.3 L1465.8,865.5 L1467.2,866.8 L1468.6,868.1 L1469.9,869.6 L1471.1,871.1 L1472.1,872.7 L1473.1,874.3 L1474.0,876.0 L1474.8,877.7 L1475.5,879.5 L1476.1,881.4 L1476.5,883.3 L1476.9,885.2 L1477.1,887.1 L1477.3,889.1 L1477.3,891.0 L1477.2,893.0 L1477.0,895.0 L1396.0,895.0 L1396.3,893.0 L1396.7,891.0 L1397.3,889.1 L1397.9,887.1Z" fill="#ff48ac" filter="url(#bev)"/>
<path d="M814.0,1017.0 L821.3,960.0 L704.9,960.0 L734.7,727.0 L668.7,727.0 L631.6,1017.0 L814.0,1017.0Z M1221.0,1016.8 L1326.6,818.7 L1265.3,818.7 L1198.3,954.5 L1167.2,818.7 L1100.2,818.7 L1155.0,1016.8 L1221.0,1016.8Z M1071.2,888.3 L1068.8,878.6 L1065.3,869.3 L1060.7,860.5 L1055.2,852.3 L1048.8,844.7 L1041.5,837.8 L1033.5,831.6 L1024.7,826.4 L1015.3,822.0 L1005.4,818.5 L995.0,816.0 L984.3,814.5 L973.4,814.0 L962.3,814.5 L951.2,816.0 L940.2,818.5 L929.4,822.0 L918.9,826.4 L908.8,831.6 L899.2,837.8 L890.1,844.7 L881.8,852.3 L874.1,860.5 L867.3,869.3 L861.5,878.6 L856.5,888.3 L852.6,898.3 L849.6,908.4 L847.8,918.7 L847.0,929.0 L847.3,939.1 L848.7,949.1 L851.2,958.8 L854.7,968.1 L859.2,976.9 L864.7,985.1 L871.2,992.7 L878.4,999.6 L886.5,1005.8 L895.3,1011.0 L904.7,1015.4 L914.6,1018.9 L924.9,1021.4 L935.6,1022.9 L946.6,1023.4 L957.6,1022.9 L968.7,1021.4 L979.7,1018.9 L990.5,1015.4 L1001.1,1011.0 L1011.2,1005.8 L1020.8,999.6 L1029.8,992.7 L1038.2,985.1 L1045.8,976.9 L1052.6,968.1 L1058.5,958.8 L1063.5,949.1 L1067.4,939.1 L1070.3,929.0 L1072.2,918.7 L1073.0,908.4 L1072.6,898.3 L1071.2,888.3Z M1004.1,932.9 L1001.8,937.5 L999.2,942.0 L996.2,946.3 L992.8,950.2 L989.1,953.9 L985.1,957.2 L980.9,960.2 L976.4,962.7 L971.8,964.9 L967.1,966.5 L962.3,967.7 L957.4,968.5 L952.6,968.7 L947.8,968.5 L943.1,967.7 L938.6,966.5 L934.3,964.9 L930.2,962.7 L926.4,960.2 L923.0,957.2 L919.8,953.9 L917.1,950.2 L914.7,946.3 L912.8,942.0 L911.3,937.5 L910.3,932.9 L909.7,928.1 L909.6,923.1 L910.0,918.2 L910.9,913.3 L912.2,908.3 L914.0,903.5 L916.2,898.9 L918.9,894.4 L921.9,890.1 L925.3,886.2 L929.0,882.5 L933.0,879.2 L937.2,876.2 L941.6,873.7 L946.3,871.5 L951.0,869.9 L955.8,868.7 L960.7,867.9 L965.5,867.7 L970.3,867.9 L974.9,868.7 L979.5,869.9 L983.8,871.5 L987.8,873.7 L991.6,876.2 L995.1,879.2 L998.3,882.5 L1001.0,886.2 L1003.4,890.1 L1005.3,894.4 L1006.8,898.9 L1007.8,903.5 L1008.4,908.3 L1008.4,913.3 L1008.0,918.2 L1007.2,923.1 L1005.8,928.1 L1004.1,932.9Z M1533.3,878.6 L1530.1,869.3 L1526.1,860.5 L1521.1,852.3 L1515.3,844.7 L1508.7,837.8 L1501.3,831.6 L1493.4,826.4 L1484.8,822.0 L1475.7,818.5 L1466.2,816.0 L1456.4,814.5 L1446.4,814.0 L1436.2,814.5 L1426.0,816.0 L1415.9,818.5 L1405.9,822.0 L1396.2,826.4 L1386.9,831.6 L1378.0,837.8 L1369.6,844.7 L1361.9,852.3 L1354.8,860.5 L1348.5,869.3 L1343.0,878.6 L1338.3,888.3 L1334.6,898.3 L1331.8,908.4 L1330.0,918.7 L1329.2,929.0 L1329.3,939.1 L1330.5,949.1 L1332.7,958.8 L1335.8,968.1 L1339.9,976.9 L1344.9,985.1 L1350.7,992.7 L1357.3,999.6 L1364.6,1005.8 L1372.6,1011.0 L1381.2,1015.4 L1390.3,1018.9 L1399.7,1021.4 L1409.5,1022.9 L1419.6,1023.4 L1429.7,1022.9 L1439.9,1021.4 L1450.1,1018.9 L1460.0,1015.4 L1469.7,1011.0 L1479.1,1005.8 L1488.0,999.6 L1496.3,992.7 L1504.1,985.1 L1509.5,978.8 L1477.0,952.7 L1475.3,955.9 L1473.2,958.9 L1470.8,961.6 L1468.1,964.0 L1465.2,966.2 L1462.0,968.2 L1458.6,969.8 L1455.1,971.2 L1451.4,972.4 L1447.6,973.2 L1443.6,973.9 L1439.7,974.2 L1435.6,974.3 L1431.6,974.0 L1427.6,973.6 L1423.6,972.8 L1419.7,971.8 L1415.9,970.4 L1412.2,968.8 L1408.7,967.0 L1405.4,964.8 L1402.3,962.3 L1399.4,959.6 L1396.8,956.6 L1394.5,953.2 L1392.5,949.6 L1390.8,945.7 L1389.6,941.5 L1388.7,937.0 L1532.0,937.0 L1534.2,929.0 L1536.0,918.7 L1536.8,908.4 L1536.6,898.3 L1535.4,888.3 L1533.3,878.6Z M1397.9,887.1 L1398.7,885.2 L1399.5,883.3 L1400.4,881.4 L1401.5,879.5 L1402.6,877.7 L1403.9,876.0 L1405.2,874.3 L1406.6,872.7 L1408.1,871.1 L1409.7,869.6 L1411.3,868.1 L1413.0,866.8 L1414.8,865.5 L1416.6,864.3 L1418.5,863.1 L1420.5,862.1 L1422.5,861.1 L1424.5,860.3 L1426.5,859.5 L1428.6,858.9 L1430.7,858.3 L1432.9,857.8 L1435.0,857.5 L1437.1,857.2 L1439.3,857.1 L1441.4,857.0 L1443.5,857.1 L1445.6,857.2 L1447.7,857.5 L1449.7,857.8 L1451.7,858.3 L1453.7,858.9 L1455.6,859.5 L1457.4,860.3 L1459.2,861.1 L1461.0,862.1 L1462.7,863.1 L1464.3,864.3 L1465.8,865.5 L1467.2,866.8 L1468.6,868.1 L1469.9,869.6 L1471.1,871.1 L1472.1,872.7 L1473.1,874.3 L1474.0,876.0 L1474.8,877.7 L1475.5,879.5 L1476.1,881.4 L1476.5,883.3 L1476.9,885.2 L1477.1,887.1 L1477.3,889.1 L1477.3,891.0 L1477.2,893.0 L1477.0,895.0 L1396.0,895.0 L1396.3,893.0 L1396.7,891.0 L1397.3,889.1 L1397.9,887.1Z" fill="none" stroke="#8a4a70" stroke-width="1" opacity="0.6"/>
</svg><!--/LOVE-->
<!-- v scroll -->
<div class="a" style="left:2108px;top:172px;width:33px;height:1442px;background:#454545"></div>
<div class="a" style="left:2114px;top:245px;width:20px;height:551px;background:#656565;border-radius:10px"></div>
<!-- status bar -->
<div class="a" style="left:82px;top:1614px;width:2059px;height:28px;background:#454545"></div>
<div class="a" style="left:787px;top:1620px;width:574px;height:20px;background:#656565;border-radius:10px"></div>
<!-- right dividers -->
<div class="a" style="left:2140px;top:114px;width:6px;height:1528px;background:#383838"></div><div class="a" style="left:2141.5px;top:114px;width:2.5px;height:1528px;background:#474747"></div>
<div class="a" style="left:2146px;top:114px;width:74px;height:1528px;background:#535353"></div>
<div class="a" style="left:2146px;top:114px;width:74px;height:23px;background:#424242"></div>
<div class="a" style="left:2220px;top:114px;width:6px;height:1528px;background:#383838"></div><div class="a" style="left:2222px;top:114px;width:2px;height:1528px;background:#474747"></div>
<div class="a" style="left:2226px;top:114px;width:562px;height:23px;background:#424242"></div>
<!-- panels -->
<div class="a" style="left:2226px;top:137px;width:562px;height:751px;background:#535353"></div>
<div class="a" style="left:2226px;top:888px;width:562px;height:5px;background:#383838"></div>
<div class="a" style="left:2226px;top:893px;width:562px;height:749px;background:#535353"></div>

<!-- ===== TITLE BAR CONTENT ===== -->
<div class="a" style="left:14px;top:10px;width:24px;height:24px;border-radius:50%;background:#ee6a5e"></div>
<div class="a" style="left:54px;top:10px;width:24px;height:24px;border-radius:50%;background:#f5bf4f"></div>
<div class="a" style="left:94px;top:10px;width:24px;height:24px;border-radius:50%;background:#61c554"></div>
<div class="t" style="left:1294px;top:11px;font-size:27.2px;color:#e8e8e8">Adobe Photoshop 2025</div>

<!-- ===== OPTIONS BAR CONTENT ===== -->
<div class="a" style="left:8px;top:60px;width:5px;height:38px;background:repeating-linear-gradient(to bottom,#3a3a3a 0 2px,transparent 2px 4px)"></div>
<svg style="left:0;top:46px" width="80" height="66"><path d="M54,18 L70,34 L66,37 L66,47 L58,47 L58,35 L50,35 L50,47 L42,47 L42,37 L38,34 Z" fill="#e2e2e2"/></svg>
<div class="a" style="left:104px;top:56px;width:2px;height:46px;background:#3a3a3a"></div>
<svg style="left:110px;top:56px" width="50" height="46" viewBox="0 0 50 46"><g fill="#e2e2e2"><rect x="24" y="11" width="2" height="26"/><rect x="12" y="23" width="26" height="2"/><path d="M25,8 L31,14 L19,14Z M25,40 L31,34 L19,34Z M10,24 L16,18 L16,30Z M40,24 L34,18 L34,30Z"/></g></svg>
<svg style="left:168px;top:70px" width="22" height="20"><path d="M4,7 L11,14 L18,7" fill="none" stroke="#d8d8d8" stroke-width="2"/></svg>
<div class="a" style="left:202px;top:56px;width:2px;height:46px;background:#3a3a3a"></div>
<div class="a" style="left:218px;top:69px;width:20px;height:20px;border-radius:4px;background:#d8d8d8"></div>
<svg style="left:218px;top:69px" width="20" height="20"><path d="M4.5,10 L8.5,14 L15.5,6" fill="none" stroke="#2a2a2a" stroke-width="3"/></svg>
<div class="t" style="left:254px;top:69px;font-size:22px;color:#f0f0f0">Auto-Select:</div>
<div class="a" style="left:388px;top:60px;width:108px;height:37px;border-radius:5px;background:#404040;border:1.5px solid #5c5c5c"></div>
<div class="t" style="left:404px;top:69.5px;font-size:20.8px;color:#f0f0f0">Layer</div>
<svg style="left:472px;top:70px" width="20" height="20"><path d="M3,7 L10,14 L17,7" fill="none" stroke="#d8d8d8" stroke-width="2"/></svg>
<div class="a" style="left:506px;top:56px;width:2px;height:46px;background:#3a3a3a"></div>
<div class="a" style="left:515px;top:69px;width:20px;height:20px;border-radius:4px;background:#454545;border:2px solid #6c6c6c"></div>
<div class="t" style="left:551px;top:69.5px;font-size:21.5px;color:#f0f0f0">Show Transform Controls</div>
<div class="a" style="left:807px;top:56px;width:2px;height:46px;background:#3a3a3a"></div>
<svg style="left:820px;top:56px" width="600" height="50"><g fill="#a3a3a3">
<rect x="10" y="8" width="2" height="30"/><rect x="14" y="14" width="14" height="8"/><rect x="14" y="26" width="21" height="8"/>
<rect x="73.5" y="8" width="2" height="30"/><rect x="68" y="14" width="14" height="8"/><rect x="63.6" y="26" width="21.5" height="8"/>
<rect x="137" y="8" width="2" height="30"/><rect x="121" y="14" width="14" height="8"/><rect x="114" y="26" width="21" height="8"/>
<rect x="171" y="13" width="32" height="2"/><rect x="171" y="32" width="32" height="2"/><rect x="177" y="19" width="20" height="8"/>
<rect x="243" y="12" width="29" height="2"/><rect x="247" y="15" width="8" height="21"/><rect x="259" y="15" width="8" height="14"/>
<rect x="295" y="23" width="28" height="2"/><rect x="299" y="13" width="8" height="21"/><rect x="311" y="17" width="8" height="14"/>
<rect x="347" y="33" width="28" height="2"/><rect x="351" y="10" width="8" height="22"/><rect x="363" y="17" width="8" height="15"/>
<rect x="410" y="7" width="2" height="32"/><rect x="430" y="7" width="2" height="32"/><rect x="417" y="14" width="8" height="19"/>
</g>
<rect x="221" y="0" width="2" height="46" fill="#3a3a3a"/><rect x="455" y="0" width="2" height="46" fill="#3a3a3a"/><rect x="525" y="0" width="2" height="46" fill="#3a3a3a"/>
<g fill="#d8d8d8"><circle cx="479" cy="22" r="4"/><circle cx="491" cy="22" r="4"/><circle cx="503" cy="22" r="4"/></g>
</svg>
<svg style="left:1370px;top:60px" width="44" height="42" viewBox="0 0 44 42"><g fill="#d8d8d8">
<path d="M16.5,6 h5 l0.8,3.2 a10,10 0 0 1 3,1.7 l3.1,-1 l2.5,4.3 l-2.4,2.2 a10,10 0 0 1 0,3.4 l2.4,2.2 l-2.5,4.3 l-3.1,-1 a10,10 0 0 1 -3,1.7 l-0.8,3.2 h-5 l-0.8,-3.2 a10,10 0 0 1 -3,-1.7 l-3.1,1 l-2.5,-4.3 l2.4,-2.2 a10,10 0 0 1 0,-3.4 l-2.4,-2.2 l2.5,-4.3 l3.1,1 a10,10 0 0 1 3,-1.7 Z M19,14 a5,5 0 1 0 0.01,0 Z" fill-rule="evenodd"/>
<path d="M30,34 h8 l-4,3 z"/></g></svg>
<div class="a" style="left:2473px;top:55px;width:107px;height:48px;border-radius:24px;background:#3874de"></div>
<div class="t" style="left:2500px;top:68.5px;font-size:19.5px;font-weight:700;color:#fff">Share</div>
<svg style="left:2606px;top:58px" width="42" height="42" viewBox="0 0 42 42"><g fill="#b4b4b4"><rect x="19" y="4" width="4" height="5" rx="1"/><path d="M21,7 C14,7 12.5,12 12.5,19 C12.5,26 11,29 7,33 L35,33 C31,29 29.5,26 29.5,19 C29.5,12 28,7 21,7Z"/><path d="M17,35 h8 a4,3 0 0 1 -8,0z"/></g></svg>
<svg style="left:2670px;top:58px" width="42" height="42" viewBox="0 0 42 42"><circle cx="20" cy="19" r="11" fill="none" stroke="#dadada" stroke-width="3"/><path d="M28,27 L35,34" stroke="#dadada" stroke-width="3.5" stroke-linecap="round"/></svg>
<svg style="left:2736px;top:59px" width="42" height="42" viewBox="0 0 42 42"><circle cx="20" cy="20" r="15.5" fill="none" stroke="#dadada" stroke-width="3"/><path d="M15,16 a5,5 0 1 1 7,4.5 c-1.5,0.8 -2,1.8 -2,3.5" fill="none" stroke="#dadada" stroke-width="3"/><circle cx="20" cy="28.5" r="2" fill="#dadada"/></svg>

<!-- ===== TABS ===== -->
<div class="a" style="left:82px;top:170px;width:2059px;height:2px;background:#383838"></div>
<div class="a" style="left:703px;top:114px;width:637px;height:56px;background:#535353"></div>
<div class="a" style="left:1733px;top:114px;width:2px;height:56px;background:#383838"></div>
<svg style="left:96px;top:134px" width="16" height="16"><path d="M2,2 L14,14 M14,2 L2,14" stroke="#8c8c8c" stroke-width="1.4"/></svg>
<svg style="left:718px;top:134px" width="16" height="16"><path d="M2,2 L14,14 M14,2 L2,14" stroke="#8c8c8c" stroke-width="1.4"/></svg>
<svg style="left:1356px;top:134px" width="16" height="16"><path d="M2,2 L14,14 M14,2 L2,14" stroke="#8c8c8c" stroke-width="1.4"/></svg>
<svg style="left:130px;top:129px" width="36" height="24" viewBox="0 0 36 24"><path d="M6,23 a5,5 0 0 1 -1,-9.8 a7,7 0 0 1 9,-5 a10,10 0 0 1 18,5.5 a5,5 0 0 1 -1,9.3 Z" fill="#c2c2c2"/></svg>
<svg style="left:752px;top:129px" width="36" height="24" viewBox="0 0 36 24"><path d="M6,23 a5,5 0 0 1 -1,-9.8 a7,7 0 0 1 9,-5 a10,10 0 0 1 18,5.5 a5,5 0 0 1 -1,9.3 Z" fill="#c8c8c8"/></svg>
<svg style="left:1390px;top:129px" width="36" height="24" viewBox="0 0 36 24"><path d="M6,23 a5,5 0 0 1 -1,-9.8 a7,7 0 0 1 9,-5 a10,10 0 0 1 18,5.5 a5,5 0 0 1 -1,9.3 Z" fill="#c2c2c2"/></svg>
<div class="t" style="left:175px;top:132px;font-size:23.56px;font-weight:700;color:#b8b8b8">3D text article.psdc @ 39.3% (Love, RGB/8*) *</div>
<div class="t" style="left:797px;top:132px;font-size:23.7px;font-weight:700;color:#f2f2f2">3D text article copy (1).psdc @ 44.2% (RGB/8*)</div>
<div class="t" style="left:1434px;top:132px;font-size:22.8px;font-weight:700;color:#b8b8b8">CB.psdc @ 100% (RGB/8)</div>

<!-- ===== LEFT TOOLBAR ===== -->
<svg style="left:8px;top:118px" width="20" height="14"><path d="M2,2 L7,7 L2,12 M10,2 L15,7 L10,12" fill="none" stroke="#dcdcdc" stroke-width="1.6"/></svg>
<div class="a" style="left:18px;top:144px;width:38px;height:8px;background:repeating-linear-gradient(to right,#3a3a3a 0 2px,transparent 2px 4px)"></div>
<div class="a" style="left:5px;top:170px;width:64px;height:51px;border-radius:7px;background:#383838;border:1.5px solid #646464"></div>
<svg style="left:16px;top:177.0px" width="40" height="40" viewBox="0 0 40 40"><g fill="#dcdcdc"><rect x="19" y="9" width="2.4" height="22"/><rect x="9" y="18.8" width="22" height="2.4"/><path d="M20.2,5 L25.5,10.5 L14.9,10.5Z M20.2,35 L25.5,29.5 L14.9,29.5Z M5,20 L10.5,14.7 L10.5,25.3Z M35,20 L29.5,14.7 L29.5,25.3Z"/></g></svg>
<svg style="left:55px;top:207.0px" width="8" height="8"><path d="M7,0 L7,7 L0,7Z" fill="#c8c8c8"/></svg>
<svg style="left:16px;top:229.0px" width="40" height="40" viewBox="0 0 40 40"><rect x="5.5" y="8.5" width="30" height="23" fill="none" stroke="#dcdcdc" stroke-width="2.5" stroke-dasharray="5.5 3.2"/></svg>
<svg style="left:55px;top:259.0px" width="8" height="8"><path d="M7,0 L7,7 L0,7Z" fill="#c8c8c8"/></svg>
<svg style="left:16px;top:281.0px" width="40" height="40" viewBox="0 0 40 40"><g fill="none" stroke="#dcdcdc" stroke-width="2"><path d="M5,13 L14,17 M6,14 L15,29 M7,35 L17,27 L32,20 L32,18 M9,37 L14,32"/><circle cx="15.5" cy="28" r="3"/><path d="M17,9 h4 a6,6 0 0 1 0,12 h-4" stroke-width="4"/></g></svg>
<svg style="left:55px;top:311.0px" width="8" height="8"><path d="M7,0 L7,7 L0,7Z" fill="#c8c8c8"/></svg>
<svg style="left:16px;top:333.0px" width="40" height="40" viewBox="0 0 40 40"><g fill="#dcdcdc"><path d="M5.5,32 L24,13.5 a4,4 0 0 1 5.7,5.7 L11.2,37.7 a4,4 0 0 1 -5.7,-5.7Z"/><path d="M19,1 l1.3,4 l4,1.3 l-4,1.3 l-1.3,4 l-1.3,-4 l-4,-1.3 l4,-1.3z M33,0 l1.6,4.8 l4.8,1.6 l-4.8,1.6 l-1.6,4.8 l-1.6,-4.8 l-4.8,-1.6 l4.8,-1.6z M37,12 l1.1,3.2 l3.2,1.1 l-3.2,1.1 l-1.1,3.2 l-1.1,-3.2 l-3.2,-1.1 l3.2,-1.1z"/></g></svg>
<svg style="left:55px;top:363.0px" width="8" height="8"><path d="M7,0 L7,7 L0,7Z" fill="#c8c8c8"/></svg>
<svg style="left:16px;top:385.0px" width="40" height="40" viewBox="0 0 40 40"><g fill="#dcdcdc"><path d="M4,33 L21,20 L25,25 Z"/><path d="M20,17 L26,9 L39,9 L27,23 Z"/></g></svg>
<svg style="left:55px;top:415.0px" width="8" height="8"><path d="M7,0 L7,7 L0,7Z" fill="#c8c8c8"/></svg>
<svg style="left:16px;top:437.0px" width="40" height="40" viewBox="0 0 40 40"><g fill="none" stroke="#dcdcdc" stroke-width="2.2"><rect x="7" y="8" width="26" height="24"/><path d="M7,8 L33,32 M33,8 L7,32"/></g><g fill="#dcdcdc"><rect x="5" y="6" width="4" height="4"/><rect x="31" y="6" width="4" height="4"/><rect x="5" y="30" width="4" height="4"/><rect x="31" y="30" width="4" height="4"/></g></svg>
<svg style="left:16px;top:489.0px" width="40" height="40" viewBox="0 0 40 40"><g fill="#dcdcdc"><path d="M24,6 a4,4 0 0 1 6,6 l-3,3 l2,2 l-3,3 l-8,-8 l3,-3 l2,2z"/></g><path d="M19,14 L8,27 a3,3 0 0 0 4,4 L24,20" fill="none" stroke="#dcdcdc" stroke-width="2"/></svg>
<svg style="left:55px;top:519.0px" width="8" height="8"><path d="M7,0 L7,7 L0,7Z" fill="#c8c8c8"/></svg>
<svg style="left:16px;top:541.0px" width="40" height="40" viewBox="0 0 40 40"><g><path d="M8,28 L25,11 a5,5 0 0 1 7,7 L15,35 a5,5 0 0 1 -7,-7Z" fill="#dcdcdc"/><g fill="#535353"><circle cx="18" cy="21" r="1.6"/><circle cx="22" cy="25" r="1.6"/><circle cx="22" cy="17" r="1.6"/><circle cx="26" cy="21" r="1.6"/></g><path d="M7,23 a9,9 0 0 1 16,-9" fill="none" stroke="#dcdcdc" stroke-width="2" stroke-dasharray="3 2"/></g></svg>
<svg style="left:55px;top:571.0px" width="8" height="8"><path d="M7,0 L7,7 L0,7Z" fill="#c8c8c8"/></svg>
<svg style="left:16px;top:593.0px" width="40" height="40" viewBox="0 0 40 40"><g fill="#dcdcdc"><path d="M21,22 L31,7 a1.5,1.5 0 0 1 2,1.5 L24,25Z"/><path d="M19,23 a5,5 0 0 1 4,5 c-1,5 -8,7 -14,7 c3,-2 3,-5 4,-8 a5,5 0 0 1 6,-4z"/></g></svg>
<svg style="left:55px;top:623.0px" width="8" height="8"><path d="M7,0 L7,7 L0,7Z" fill="#c8c8c8"/></svg>
<svg style="left:16px;top:645.0px" width="40" height="40" viewBox="0 0 40 40"><g fill="#dcdcdc"><circle cx="20" cy="10" r="5"/><rect x="17.5" y="12" width="5" height="10"/><path d="M8,24 a3,3 0 0 1 3,-3 h18 a3,3 0 0 1 3,3 v4 h-24z"/><rect x="10" y="31" width="20" height="2"/></g></svg>
<svg style="left:55px;top:675.0px" width="8" height="8"><path d="M7,0 L7,7 L0,7Z" fill="#c8c8c8"/></svg>
<svg style="left:16px;top:697.0px" width="40" height="40" viewBox="0 0 40 40"><g fill="#dcdcdc"><path d="M21,23 L31,7 a1.5,1.5 0 0 1 2,1.5 L25,25Z"/><path d="M19,23 a5,5 0 0 1 4,5 c-1,5 -8,7 -14,7 c3,-2 3,-5 4,-8 a5,5 0 0 1 6,-4z"/><path d="M6,15 L12,11 L11,18Z"/></g><path d="M10,15 a10,8 0 0 1 12,-2" fill="none" stroke="#dcdcdc" stroke-width="2"/><path d="M32,21 v1 M31,25 v1 M29,28 v1 M26,31 v1" stroke="#dcdcdc" stroke-width="2"/></svg>
<svg style="left:55px;top:727.0px" width="8" height="8"><path d="M7,0 L7,7 L0,7Z" fill="#c8c8c8"/></svg>
<svg style="left:16px;top:749.0px" width="40" height="40" viewBox="0 0 40 40"><g><path d="M21,6 L33,15 L22,28 L11,19Z" fill="#dcdcdc"/><path d="M11,19 L5,26 L11,32 L33,32 M22,28 L16,32" fill="none" stroke="#dcdcdc" stroke-width="2"/></g></svg>
<svg style="left:55px;top:779.0px" width="8" height="8"><path d="M7,0 L7,7 L0,7Z" fill="#c8c8c8"/></svg>
<svg style="left:16px;top:801.0px" width="40" height="40" viewBox="0 0 40 40"><g fill="none" stroke="#dcdcdc" stroke-width="2"><path d="M6,22 L18,9 L31,22 L19,34Z"/><path d="M16,15 c-2,-5 -1,-8 1,-8 c2,0 3,3 3,10"/></g><g fill="#dcdcdc"><circle cx="20" cy="17" r="2"/><path d="M33,21 c2,3 4,5 4,7 a3.5,3.5 0 0 1 -7,0 c0,-2 2,-4 3,-7z"/></g></svg>
<svg style="left:55px;top:831.0px" width="8" height="8"><path d="M7,0 L7,7 L0,7Z" fill="#c8c8c8"/></svg>
<svg style="left:16px;top:853.0px" width="40" height="40" viewBox="0 0 40 40"><path d="M20,6 c2,7 10,13 10,20 a10,10 0 0 1 -20,0 c0,-7 8,-13 10,-20z" fill="#dcdcdc"/></svg>
<svg style="left:55px;top:883.0px" width="8" height="8"><path d="M7,0 L7,7 L0,7Z" fill="#c8c8c8"/></svg>
<svg style="left:16px;top:905.0px" width="40" height="40" viewBox="0 0 40 40"><g fill="#dcdcdc"><path d="M18,22 L26,8 a1.5,1.5 0 0 1 2,1 L21,24Z"/><path d="M16,23 a4.5,4.5 0 0 1 4,4 c-1,4 -7,6 -12,6 c2,-2 3,-4 3,-7 a4.5,4.5 0 0 1 5,-3z"/></g><circle cx="28" cy="27" r="6" fill="none" stroke="#dcdcdc" stroke-width="2"/><path d="M24,31 L32,23" stroke="#dcdcdc" stroke-width="3"/></svg>
<svg style="left:16px;top:957.0px" width="40" height="40" viewBox="0 0 40 40"><g fill="#dcdcdc"><circle cx="24" cy="16" r="10"/></g><path d="M17,23 L8,32" stroke="#dcdcdc" stroke-width="3" stroke-linecap="round"/></svg>
<svg style="left:55px;top:987.0px" width="8" height="8"><path d="M7,0 L7,7 L0,7Z" fill="#c8c8c8"/></svg>
<svg style="left:16px;top:1009.0px" width="40" height="40" viewBox="0 0 40 40"><g fill="none" stroke="#dcdcdc" stroke-width="2"><path d="M9,31 L13,18 L22,11 L29,18 L22,27Z"/><path d="M9,31 L18,22"/></g><g fill="#dcdcdc"><path d="M21,9 L26,5 L34,13 L30,18Z"/><circle cx="18.5" cy="21.5" r="2.2"/></g></svg>
<svg style="left:55px;top:1039.0px" width="8" height="8"><path d="M7,0 L7,7 L0,7Z" fill="#c8c8c8"/></svg>
<svg style="left:16px;top:1061.0px" width="40" height="40" viewBox="0 0 40 40"><g fill="#dcdcdc"><path d="M10,6 h24 v7.5 h-3.2 v-3.5 h-7 v18.5 h3.5 v3.5 h-10.6 v-3.5 h3.5 v-18.5 h-7 v3.5 h-3.2z"/></g></svg>
<svg style="left:55px;top:1091.0px" width="8" height="8"><path d="M7,0 L7,7 L0,7Z" fill="#c8c8c8"/></svg>
<svg style="left:16px;top:1113.0px" width="40" height="40" viewBox="0 0 40 40"><path d="M12.5,4 L12.5,29 L18,23.5 L22.5,34 L26,32.3 L21.5,22 L30,22 Z" fill="#0a0a0a" stroke="#dcdcdc" stroke-width="1.8" stroke-linejoin="round"/></svg>
<svg style="left:55px;top:1143.0px" width="8" height="8"><path d="M7,0 L7,7 L0,7Z" fill="#c8c8c8"/></svg>
<svg style="left:16px;top:1165.0px" width="40" height="40" viewBox="0 0 40 40"><rect x="6" y="9" width="28" height="22" fill="#6a6a6a" stroke="#dcdcdc" stroke-width="2.5"/></svg>
<svg style="left:55px;top:1195.0px" width="8" height="8"><path d="M7,0 L7,7 L0,7Z" fill="#c8c8c8"/></svg>
<svg style="left:16px;top:1217.0px" width="40" height="40" viewBox="0 0 40 40"><g fill="#dcdcdc"><rect x="10.5" y="9" width="3.6" height="17" rx="1.8"/><rect x="16" y="5" width="3.6" height="21" rx="1.8"/><rect x="21.5" y="5.5" width="3.6" height="21" rx="1.8"/><rect x="27" y="9" width="3.6" height="17" rx="1.8"/><path d="M9.5,21 h21.5 c1,11 -3,17 -10.5,17 c-5,0 -8,-3 -11,-7 l-6,-7.5 a2.2,2.2 0 0 1 3.4,-2.8 l2.6,2.8z"/></g></svg>
<svg style="left:55px;top:1247.0px" width="8" height="8"><path d="M7,0 L7,7 L0,7Z" fill="#c8c8c8"/></svg>
<svg style="left:16px;top:1269.0px" width="40" height="40" viewBox="0 0 40 40"><circle cx="17" cy="17" r="10" fill="none" stroke="#dcdcdc" stroke-width="2.6"/><path d="M24.5,24.5 L32,32" stroke="#dcdcdc" stroke-width="3.2" stroke-linecap="round"/></svg>
<svg style="left:16px;top:1321.0px" width="40" height="40" viewBox="0 0 40 40"><g fill="none" stroke="#dcdcdc" stroke-width="2"><path d="M13,32 L17,20 L25,13 L32,20 L25,29Z"/><path d="M4,8 v-3 h3 M4,30 v3 h3 M13,5 h3 v3 M4,16 v2"/></g><path d="M10,8 c-4,6 -5,14 0,22" stroke="#7a7a7a" stroke-width="4" fill="none"/><path d="M10,10 v18" stroke="#dcdcdc" stroke-width="1.5" stroke-dasharray="1.5 2.5"/><g fill="#dcdcdc"><path d="M24,10 L29,6 L36,13 L33,17Z"/><circle cx="21.5" cy="23" r="2"/></g></svg>
<svg style="left:16px;top:1372.0px" width="40" height="40" viewBox="0 0 40 40"><g fill="#dcdcdc"><circle cx="8" cy="20" r="3.5"/><circle cx="20" cy="20" r="3.5"/><circle cx="32" cy="20" r="3.5"/></g></svg>
<svg style="left:55px;top:1403.0px" width="8" height="8"><path d="M7,0 L7,7 L0,7Z" fill="#c8c8c8"/></svg>

<svg style="left:2px;top:1426px" width="30" height="30"><rect x="4" y="3" width="14" height="14" fill="#0a0a0a" stroke="#dcdcdc" stroke-width="1.5"/><rect x="11" y="10" width="14" height="14" fill="#fff" stroke="#0a0a0a" stroke-width="1.5"/><rect x="9" y="8" width="17" height="17" fill="none" stroke="#dcdcdc" stroke-width="1.2"/><rect x="4" y="3" width="14" height="14" fill="#0a0a0a"/></svg>
<svg style="left:40px;top:1424px" width="30" height="32"><path d="M8,12 c6,-3 12,0 13,10" fill="none" stroke="#dcdcdc" stroke-width="3"/><path d="M3,12 L10,5 L10,19Z M14,22 L28,22 L21,29Z" fill="#dcdcdc"/></svg>
<div class="a" style="left:6px;top:1460px;width:40px;height:40px;background:#2a2a2a"></div>
<div class="a" style="left:26px;top:1479px;width:40px;height:40px;background:#2a2a2a"></div>
<div class="a" style="left:28px;top:1481px;width:36px;height:36px;background:#000;border:2px solid #fff"></div>
<div class="a" style="left:6px;top:1460px;width:40px;height:40px;background:#2a2a2a"></div>
<div class="a" style="left:8px;top:1462px;width:36px;height:36px;background:#8a0048;border:2.5px solid #fff"></div>
<svg style="left:16px;top:1540px" width="40" height="32"><rect x="2.5" y="2.5" width="33" height="24" fill="none" stroke="#dcdcdc" stroke-width="2"/><circle cx="19" cy="14.5" r="8" fill="none" stroke="#dcdcdc" stroke-width="2" stroke-dasharray="1.5 2"/></svg>
<svg style="left:16px;top:1592px" width="40" height="32"><path d="M4,9 h8 M4,9 v18 h24 v-3" fill="none" stroke="#dcdcdc" stroke-width="2"/><rect x="12" y="2.5" width="22" height="19" fill="#535353" stroke="#dcdcdc" stroke-width="2"/></svg>
<svg style="left:55px;top:1621px" width="8" height="8"><path d="M7,0 L7,7 L0,7Z" fill="#c8c8c8"/></svg>


<!-- ===== STATUS BAR ===== -->
<div class="a" style="left:201.5px;top:1615px;width:367px;height:27px;background:#4b4b4b"></div>
<div class="t" style="left:98.5px;top:1620.5px;font-size:25.4px;color:#e8e8e8">44.23%</div>
<div class="t" style="left:235.8px;top:1620.3px;font-size:21.9px;color:#cfcfcf">3934 px x 2861 px (300 ppi)</div>
<svg style="left:546px;top:1621px" width="16" height="22"><path d="M3,2 L11,11 L3,20" fill="none" stroke="#d8d8d8" stroke-width="1.6"/></svg>
<!--RIGHT-->
<svg style="left:2190px;top:117px" width="22" height="16" viewBox="0 0 22 16"><path d="M9,2 L4,7.5 L9,13 M17,2 L12,7.5 L17,13" fill="none" stroke="#dcdcdc" stroke-width="1.6"/></svg>
<div class="a" style="left:2146px;top:274px;width:74px;height:3px;background:#383838;"></div>
<div class="a" style="left:2146px;top:412px;width:74px;height:2px;background:#383838;"></div>
<div class="a" style="left:2146px;top:550px;width:74px;height:2px;background:#383838;"></div>
<div class="a" style="left:2146px;top:632px;width:74px;height:2px;background:#383838;"></div>
<div class="a" style="left:2146px;top:714px;width:74px;height:2px;background:#383838;"></div>
<div class="a" style="left:2146px;top:797px;width:74px;height:2px;background:#383838;"></div>
<div class="a" style="left:2164px;top:144px;width:38px;height:8px;background:repeating-linear-gradient(to right,#3c3c3c 0 2px,transparent 2px 4px);"></div>
<div class="a" style="left:2164px;top:282px;width:38px;height:8px;background:repeating-linear-gradient(to right,#3c3c3c 0 2px,transparent 2px 4px);"></div>
<div class="a" style="left:2164px;top:420px;width:38px;height:8px;background:repeating-linear-gradient(to right,#3c3c3c 0 2px,transparent 2px 4px);"></div>
<div class="a" style="left:2164px;top:558px;width:38px;height:8px;background:repeating-linear-gradient(to right,#3c3c3c 0 2px,transparent 2px 4px);"></div>
<div class="a" style="left:2164px;top:641px;width:38px;height:8px;background:repeating-linear-gradient(to right,#3c3c3c 0 2px,transparent 2px 4px);"></div>
<div class="a" style="left:2164px;top:722px;width:38px;height:8px;background:repeating-linear-gradient(to right,#3c3c3c 0 2px,transparent 2px 4px);"></div>
<svg style="left:2166px;top:164px" width="34" height="38" viewBox="0 0 34 38"><g fill="none" stroke="#dcdcdc" stroke-width="2"><rect x="3" y="3" width="9" height="8"/><rect x="3" y="14" width="9" height="8"/></g><rect x="2" y="25" width="11" height="10" fill="#dcdcdc"/><path d="M22,36 C30,32 33,24 30,15 C29,12 27,10 24,9" fill="none" stroke="#dcdcdc" stroke-width="2.6"/><path d="M19,6 L28,3 L26,12Z" fill="#dcdcdc"/></svg>
<svg style="left:2166px;top:221px" width="34" height="36" viewBox="0 0 34 36"><path d="M5,2 h24 a3,3 0 0 1 3,3 v16 a3,3 0 0 1 -3,3 h-16 l-8,8 v-8 h0 a3,3 0 0 1 -3,-3 v-16 a3,3 0 0 1 3,-3z" fill="#dcdcdc"/></svg>
<svg style="left:2162px;top:302px" width="44" height="40" viewBox="0 0 44 40"><g fill="#dcdcdc"><rect x="2" y="2" width="4" height="4"/><rect x="8" y="2" width="10" height="3"/><rect x="2" y="9" width="4" height="4"/><rect x="8" y="9.5" width="10" height="3"/><rect x="2" y="16" width="4" height="4"/><rect x="8" y="17" width="10" height="3"/><path d="M24,24 L38,6 a2,2 0 0 1 3,2 L28,27Z"/><path d="M21,25 a5,5 0 0 1 5,5 c-1,5 -9,7 -15,7 c3,-2 3,-5 4,-8 a5,5 0 0 1 6,-4z"/></g></svg>
<svg style="left:2162px;top:361px" width="44" height="36" viewBox="0 0 44 36"><g fill="#dcdcdc"><path d="M2,7 c3,-6 11,-6 13,0 c-2,6 -10,6 -13,0z"/><rect x="16" y="5.5" width="22" height="4"/><rect x="6" y="22" width="20" height="4"/><path d="M26,24 L38,15 a9,9 0 0 1 0,19z"/></g></svg>
<div class="t" style="left:2170px;top:442.7px;font-size:37px;color:#dcdcdc;font-family:'Liberation Sans'">A</div>
<div class="a" style="left:2195px;top:441px;width:2.2px;height:34px;background:#dcdcdc;"></div>
<svg style="left:2168px;top:499px" width="30" height="34" viewBox="0 0 30 34"><g fill="#dcdcdc"><path d="M14,2 h-4 a8,8 0 0 0 0,16 h4z"/><rect x="13" y="2" width="4" height="30"/><rect x="20" y="2" width="3" height="30"/><rect x="13" y="2" width="10" height="3"/></g></svg>
<div class="t" style="left:2166px;top:576.1px;font-size:40px;color:#dcdcdc;font-family:'Liberation Serif';font-style:italic">A</div>
<svg style="left:2164px;top:660px" width="38" height="38" viewBox="0 0 38 38"><circle cx="19" cy="19" r="16" fill="#dcdcdc"/><path d="M12,12 L17,7 L21,11 L16,16Z" fill="#535353"/></svg>
<svg style="left:2164px;top:739px" width="38" height="46" viewBox="0 0 38 46"><g><circle cx="12" cy="12" r="9" fill="#dcdcdc"/><circle cx="19" cy="22" r="9" fill="#dcdcdc"/><circle cx="27" cy="15" r="8" fill="none" stroke="#dcdcdc" stroke-width="2"/><path d="M8,7 L11,4 L14,8 L11,11Z" fill="#535353"/><path d="M3,40 h32" stroke="#dcdcdc" stroke-width="2"/><circle cx="14" cy="40" r="4" fill="#535353" stroke="#dcdcdc" stroke-width="2"/></g></svg>
<div class="a" style="left:2226px;top:137px;width:476px;height:56px;background:#424242;"></div>
<div class="a" style="left:2226px;top:191px;width:476px;height:2px;background:#3a3a3a;"></div>
<div class="a" style="left:2316px;top:137px;width:2px;height:56px;background:#383838;"></div>
<div class="a" style="left:2446px;top:137px;width:2px;height:56px;background:#383838;"></div>
<div class="a" style="left:2580px;top:137px;width:2px;height:56px;background:#383838;"></div>
<div class="a" style="left:2701px;top:137px;width:2px;height:56px;background:#383838;"></div>
<div class="t" style="left:2244px;top:155.1px;font-size:20.9px;font-weight:700;color:#b8b8b8;">Color</div>
<div class="t" style="left:2334px;top:155.5px;font-size:20.4px;font-weight:700;color:#b8b8b8;">Swatches</div>
<div class="t" style="left:2464.5px;top:155.1px;font-size:20.9px;font-weight:700;color:#b8b8b8;">Gradients</div>
<div class="t" style="left:2599px;top:155.2px;font-size:20.8px;font-weight:700;color:#b8b8b8;">Patterns</div>
<div class="t" style="left:2718px;top:155.4px;font-size:20.5px;font-weight:700;color:#f4f4f4;">Layers</div>
<div class="a" style="left:2233px;top:211.5px;width:175px;height:37px;background:#424242;border:1.5px solid #636363;border-radius:6px;box-sizing:border-box"></div>
<svg style="left:2248px;top:219px" width="26" height="24" viewBox="0 0 26 24"><circle cx="10" cy="10" r="6.5" fill="none" stroke="#dcdcdc" stroke-width="2.4"/><path d="M14.5,14.5 L20,20" stroke="#dcdcdc" stroke-width="3" stroke-linecap="round"/></svg>
<div class="t" style="left:2276px;top:219.6px;font-size:20.5px;color:#f0f0f0;">Kind</div>
<svg style="left:2386px;top:225px" width="17" height="11" viewBox="0 0 17 11"><path d="M2,2 L8.5,9 L15,2" fill="none" stroke="#d8d8d8" stroke-width="2"/></svg>
<svg style="left:2430px;top:218px" width="28" height="24" viewBox="0 0 28 24"><rect x="2" y="3" width="23" height="18" fill="none" stroke="#dcdcdc" stroke-width="2"/><path d="M5,19 L10,11 L14,16 L17,12 L22,19Z" fill="#dcdcdc"/></svg>
<svg style="left:2478px;top:217px" width="26" height="26" viewBox="0 0 26 26"><circle cx="13" cy="13" r="10" fill="none" stroke="#dcdcdc" stroke-width="2.2"/><path d="M20,6 A10,10 0 0 1 6,20Z" fill="#dcdcdc"/></svg>
<svg style="left:2527px;top:217px" width="26" height="26" viewBox="0 0 26 26"><path d="M3,3 h20 v6 h-2.5 v-3 h-6 v15 h3 v2.5 h-9 v-2.5 h3 v-15 h-6 v3 h-2.5z" fill="#dcdcdc"/></svg>
<svg style="left:2575px;top:217px" width="28" height="28" viewBox="0 0 28 28"><rect x="5" y="5" width="18" height="18" fill="none" stroke="#dcdcdc" stroke-width="2"/><g fill="#535353" stroke="#dcdcdc" stroke-width="1.6"><rect x="2" y="2" width="5" height="5"/><rect x="21" y="2" width="5" height="5"/><rect x="2" y="21" width="5" height="5"/><rect x="21" y="21" width="5" height="5"/></g></svg>
<svg style="left:2625px;top:217px" width="26" height="26" viewBox="0 0 26 26"><path d="M9,3 h9 l5,5 v13 h-14z" fill="none" stroke="#dcdcdc" stroke-width="2"/><rect x="3" y="12" width="10" height="11" fill="#dcdcdc"/></svg>
<div class="a" style="left:2671px;top:213px;width:19px;height:36px;background:#4a4a4a;border:1.5px solid #5c5c5c;border-radius:10px;box-sizing:border-box"></div>
<div class="a" style="left:2672.5px;top:213.5px;width:16px;height:16px;background:#e6e6e6;border-radius:50%"></div>
<div class="a" style="left:2226px;top:257px;width:562px;height:2px;background:#3f3f3f;"></div>
<div class="a" style="left:2233px;top:268px;width:260px;height:36px;background:#4a4a4a;border:1.5px solid #636363;border-radius:6px;box-sizing:border-box"></div>
<div class="t" style="left:2249px;top:275.4px;font-size:20.8px;color:#8c8c8c;">Normal</div>
<svg style="left:2472px;top:280px" width="16" height="11" viewBox="0 0 16 11"><path d="M2,2 L8.0,9 L14,2" fill="none" stroke="#8a8a8a" stroke-width="1.8"/></svg>
<div class="t" style="left:2501px;top:274.7px;font-size:21.6px;color:#8c8c8c;">Opacity:</div>
<div class="a" style="left:2586px;top:268px;width:102px;height:36px;background:#4a4a4a;border:1.5px solid #636363;border-radius:6px;box-sizing:border-box"></div>
<div class="a" style="left:2659px;top:269px;width:1.5px;height:34px;background:#5a5a5a;"></div>
<div class="t" style="left:2594px;top:275.8px;font-size:20.3px;color:#7c7c7c;">100%</div>
<svg style="left:2666px;top:281px" width="16" height="11" viewBox="0 0 16 11"><path d="M2,2 L8.0,9 L14,2" fill="none" stroke="#8a8a8a" stroke-width="1.8"/></svg>
<div class="a" style="left:2226px;top:313px;width:562px;height:2px;background:#3f3f3f;"></div>
<div class="t" style="left:2236.5px;top:331.7px;font-size:20.9px;color:#8c8c8c;">Lock:</div>
<svg style="left:2300px;top:330px" width="24" height="24" viewBox="0 0 24 24"><rect x="1.5" y="1.5" width="20" height="20" fill="none" stroke="#9a9a9a" stroke-width="2"/><g fill="#9a9a9a"><rect x="2" y="2" width="6.5" height="6.5"/><rect x="15" y="2" width="6.5" height="6.5"/><rect x="8.5" y="8.5" width="6.5" height="6.5"/><rect x="2" y="15" width="6.5" height="6.5"/><rect x="15" y="15" width="6.5" height="6.5"/></g></svg>
<svg style="left:2342px;top:327px" width="30" height="28" viewBox="0 0 30 28"><g fill="#9a9a9a"><path d="M13,16 L24,3 a2,2 0 0 1 3,2 L17,19Z"/><path d="M11,17 a4.5,4.5 0 0 1 4,4.5 c-1,4 -7,5.5 -13,5.5 c2.5,-2 3,-4 4,-7 a4.5,4.5 0 0 1 5,-3z"/></g></svg>
<svg style="left:2385px;top:327px" width="28" height="28" viewBox="0 0 28 28"><g fill="#9a9a9a"><rect x="13" y="6" width="2.4" height="16"/><rect x="6" y="12.8" width="16" height="2.4"/><path d="M14.2,2 L18.5,6.5 L10,6.5Z M14.2,26 L18.5,21.5 L10,21.5Z M2,14 L6.5,9.7 L6.5,18.3Z M26,14 L21.5,9.7 L21.5,18.3Z"/></g></svg>
<svg style="left:2428px;top:327px" width="32" height="28" viewBox="0 0 32 28"><path d="M7,7 h14 l4,4 v12 h-18z" fill="none" stroke="#9a9a9a" stroke-width="2"/><g stroke="#9a9a9a" stroke-width="2"><path d="M2,7 h3 M7,2 v3 M27,23 h3 M25,25 v3 M2,23 h3 M7,25 v3 M25,2 v3"/></g></svg>
<svg style="left:2476px;top:328px" width="24" height="26" viewBox="0 0 24 26"><path d="M6,11 v-3 a6,6 0 0 1 12,0 v3" fill="none" stroke="#9a9a9a" stroke-width="2.6"/><rect x="2" y="11" width="20" height="14" rx="2" fill="#9a9a9a"/><circle cx="12" cy="18" r="2.4" fill="#535353"/></svg>
<div class="t" style="left:2548.5px;top:332.4px;font-size:20.1px;color:#8c8c8c;">Fill:</div>
<div class="a" style="left:2586px;top:324px;width:102px;height:34px;background:#4a4a4a;border:1.5px solid #636363;border-radius:6px;box-sizing:border-box"></div>
<div class="a" style="left:2659px;top:325px;width:1.5px;height:32px;background:#5a5a5a;"></div>
<div class="t" style="left:2594px;top:332.2px;font-size:20.3px;color:#7c7c7c;">100%</div>
<svg style="left:2666px;top:337px" width="16" height="11" viewBox="0 0 16 11"><path d="M2,2 L8.0,9 L14,2" fill="none" stroke="#8a8a8a" stroke-width="1.8"/></svg>
<div class="a" style="left:2226px;top:373px;width:562px;height:2px;background:#404040;"></div>
<div class="a" style="left:2285px;top:375px;width:2px;height:463px;background:#464646;"></div>
<svg style="left:2358px;top:390px" width="28" height="20" viewBox="0 0 28 20"><path d="M1,10 C6,1.5 22,1.5 27,10 C22,18.5 6,18.5 1,10Z" fill="#dcdcdc"/><circle cx="14" cy="10" r="6.2" fill="#535353"/><circle cx="14" cy="10" r="4.6" fill="#dcdcdc"/><circle cx="15.3" cy="8.4" r="1.1" fill="#535353"/></svg>
<div class="t" style="left:2394px;top:388.2px;font-size:21.0px;color:#f0f0f0;">Inner Shadow</div>
<svg style="left:2358px;top:428px" width="28" height="20" viewBox="0 0 28 20"><path d="M1,10 C6,1.5 22,1.5 27,10 C22,18.5 6,18.5 1,10Z" fill="#dcdcdc"/><circle cx="14" cy="10" r="6.2" fill="#535353"/><circle cx="14" cy="10" r="4.6" fill="#dcdcdc"/><circle cx="15.3" cy="8.4" r="1.1" fill="#535353"/></svg>
<div class="t" style="left:2394px;top:426.2px;font-size:21.0px;color:#f0f0f0;">Inner Glow</div>
<svg style="left:2358px;top:466px" width="28" height="20" viewBox="0 0 28 20"><path d="M1,10 C6,1.5 22,1.5 27,10 C22,18.5 6,18.5 1,10Z" fill="#dcdcdc"/><circle cx="14" cy="10" r="6.2" fill="#535353"/><circle cx="14" cy="10" r="4.6" fill="#dcdcdc"/><circle cx="15.3" cy="8.4" r="1.1" fill="#535353"/></svg>
<div class="t" style="left:2394px;top:464.2px;font-size:21.0px;color:#f0f0f0;">Satin</div>
<svg style="left:2358px;top:504px" width="28" height="20" viewBox="0 0 28 20"><path d="M1,10 C6,1.5 22,1.5 27,10 C22,18.5 6,18.5 1,10Z" fill="#dcdcdc"/><circle cx="14" cy="10" r="6.2" fill="#535353"/><circle cx="14" cy="10" r="4.6" fill="#dcdcdc"/><circle cx="15.3" cy="8.4" r="1.1" fill="#535353"/></svg>
<div class="t" style="left:2394px;top:502.2px;font-size:21.0px;color:#f0f0f0;">Gradient Overlay</div>
<svg style="left:2358px;top:542px" width="28" height="20" viewBox="0 0 28 20"><path d="M1,10 C6,1.5 22,1.5 27,10 C22,18.5 6,18.5 1,10Z" fill="#dcdcdc"/><circle cx="14" cy="10" r="6.2" fill="#535353"/><circle cx="14" cy="10" r="4.6" fill="#dcdcdc"/><circle cx="15.3" cy="8.4" r="1.1" fill="#535353"/></svg>
<div class="t" style="left:2394px;top:540.2px;font-size:21.0px;color:#f0f0f0;">Outer Glow</div>
<div class="a" style="left:2226px;top:572px;width:562px;height:2px;background:#454545;"></div>
<svg style="left:2242px;top:606px" width="28" height="20" viewBox="0 0 28 20"><path d="M1,10 C6,1.5 22,1.5 27,10 C22,18.5 6,18.5 1,10Z" fill="#dcdcdc"/><circle cx="14" cy="10" r="6.2" fill="#535353"/><circle cx="14" cy="10" r="4.6" fill="#dcdcdc"/><circle cx="15.3" cy="8.4" r="1.1" fill="#535353"/></svg>
<svg style="left:2311px;top:601px" width="30" height="30" viewBox="0 0 30 30"><path d="M2,2 h26 v7 h-3 v-3.5 h-8 v19 h4 v3 h-12 v-3 h4 v-19 h-8 v3.5 h-3z" fill="#dcdcdc"/></svg>
<div class="t" style="left:2374px;top:605.3px;font-size:20.3px;color:#f0f0f0;">Love</div>
<div class="a" style="left:2226px;top:654px;width:562px;height:2px;background:#454545;"></div>
<svg style="left:2242px;top:671.5px" width="28" height="20" viewBox="0 0 28 20"><path d="M1,10 C6,1.5 22,1.5 27,10 C22,18.5 6,18.5 1,10Z" fill="#dcdcdc"/><circle cx="14" cy="10" r="6.2" fill="#535353"/><circle cx="14" cy="10" r="4.6" fill="#dcdcdc"/><circle cx="15.3" cy="8.4" r="1.1" fill="#535353"/></svg>
<svg style="left:2294px;top:670px" width="16" height="24" viewBox="0 0 16 24"><path d="M4,2 L11,11.5 L4,21" fill="none" stroke="#dcdcdc" stroke-width="1.6"/></svg>
<svg style="left:2316px;top:666px" width="32" height="28" viewBox="0 0 32 28"><path d="M2,4 a2,2 0 0 1 2,-2 h9 l2,3 h13 a2,2 0 0 1 2,2 v17 a2,2 0 0 1 -2,2 h-24 a2,2 0 0 1 -2,-2z" fill="#dcdcdc"/><rect x="2" y="6" width="28" height="1.5" fill="#535353"/></svg>
<div class="t" style="left:2368px;top:670.3px;font-size:21.3px;color:#f0f0f0;">Background shapes</div>
<div class="a" style="left:2226px;top:704px;width:562px;height:2px;background:#454545;"></div>
<svg style="left:2242px;top:728px" width="28" height="20" viewBox="0 0 28 20"><path d="M1,10 C6,1.5 22,1.5 27,10 C22,18.5 6,18.5 1,10Z" fill="#dcdcdc"/><circle cx="14" cy="10" r="6.2" fill="#535353"/><circle cx="14" cy="10" r="4.6" fill="#dcdcdc"/><circle cx="15.3" cy="8.4" r="1.1" fill="#535353"/></svg>
<div class="a" style="left:2294px;top:714px;width:64px;height:49px;background:#252525;"></div>
<div class="a" style="left:2296px;top:716px;width:60px;height:45px;background:#ee72d2;"></div>
<div class="a" style="left:2328px;top:733px;width:30px;height:30px;background:#252525;"></div>
<div class="a" style="left:2330px;top:735px;width:26px;height:26px;background:#3c3c3c;"></div>
<svg style="left:2330px;top:735px" width="26" height="26" viewBox="0 0 26 26"><rect x="6" y="6" width="14" height="14" fill="none" stroke="#dcdcdc" stroke-width="1.6"/><g fill="#3c3c3c" stroke="#dcdcdc" stroke-width="1.4"><rect x="4" y="4" width="4" height="4"/><rect x="18" y="4" width="4" height="4"/><rect x="4" y="18" width="4" height="4"/><rect x="18" y="18" width="4" height="4"/></g></svg>
<div class="t" style="left:2374px;top:728.9px;font-size:20.8px;color:#f0f0f0;">Rectangle 1</div>
<div class="a" style="left:2226px;top:771px;width:562px;height:2px;background:#454545;"></div>
<svg style="left:2242px;top:795px" width="28" height="20" viewBox="0 0 28 20"><path d="M1,10 C6,1.5 22,1.5 27,10 C22,18.5 6,18.5 1,10Z" fill="#dcdcdc"/><circle cx="14" cy="10" r="6.2" fill="#535353"/><circle cx="14" cy="10" r="4.6" fill="#dcdcdc"/><circle cx="15.3" cy="8.4" r="1.1" fill="#535353"/></svg>
<div class="a" style="left:2294px;top:780px;width:64px;height:49px;background:#252525;"></div>
<div class="a" style="left:2296px;top:782px;width:60px;height:45px;background:#ffffff;"></div>
<div class="t" style="left:2374px;top:794.0px;font-size:21.3px;color:#f0f0f0;">Background</div>
<div class="a" style="left:2226px;top:837px;width:562px;height:2px;background:#454545;"></div>
<svg style="left:2468px;top:852px" width="32" height="22" viewBox="0 0 32 22"><g fill="none" stroke="#9a9a9a" stroke-width="2.6"><path d="M12,4 h-4 a7,7 0 0 0 0,14 h4"/><path d="M20,4 h4 a7,7 0 0 1 0,14 h-4"/><path d="M9,11 h14"/></g></svg>
<div class="t" style="left:2526px;top:848.6px;font-size:30px;color:#9a9a9a;font-family:'Liberation Serif';font-style:italic">fx</div>
<svg style="left:2546px;top:876px" width="10" height="6" viewBox="0 0 10 6"><path d="M1,1 h8 l-4,4z" fill="#8a8a8a"/></svg>
<svg style="left:2580px;top:851px" width="28" height="24" viewBox="0 0 28 24"><rect x="2" y="2" width="24" height="19" rx="2" fill="#9a9a9a"/><circle cx="14" cy="11.5" r="5.5" fill="#535353"/></svg>
<svg style="left:2633px;top:850px" width="28" height="28" viewBox="0 0 28 28"><circle cx="13" cy="13" r="10" fill="none" stroke="#d0d0d0" stroke-width="2.4"/><path d="M20,6 A10,10 0 0 1 6,20Z" fill="#d0d0d0"/><path d="M20,23 h8 l-4,4z" fill="#e0e0e0"/></svg>
<svg style="left:2686px;top:850px" width="28" height="26" viewBox="0 0 28 26"><path d="M2,4 a2,2 0 0 1 2,-2 h7 l2,3 h11 a2,2 0 0 1 2,2 v15 a2,2 0 0 1 -2,2 h-20 a2,2 0 0 1 -2,-2z" fill="#d0d0d0"/></svg>
<svg style="left:2740px;top:848px" width="30" height="30" viewBox="0 0 30 30"><rect x="3" y="3" width="21" height="21" fill="none" stroke="#d0d0d0" stroke-width="2"/><path d="M13.5,8 v11 M8,13.5 h11" stroke="#d0d0d0" stroke-width="2"/></svg>
<div class="a" style="left:2368px;top:893px;width:420px;height:57px;background:#424242;"></div>
<div class="a" style="left:2368px;top:948px;width:420px;height:2px;background:#3a3a3a;"></div>
<div class="a" style="left:2368px;top:893px;width:2px;height:57px;background:#383838;"></div>
<div class="a" style="left:2494px;top:893px;width:2px;height:57px;background:#383838;"></div>
<div class="a" style="left:2606px;top:893px;width:2px;height:57px;background:#383838;"></div>
<div class="a" style="left:2684px;top:893px;width:2px;height:57px;background:#383838;"></div>
<div class="t" style="left:2244px;top:910.7px;font-size:21.2px;font-weight:700;color:#f4f4f4;">Properties</div>
<div class="a" style="left:2370px;top:893px;width:124px;height:55px;overflow:hidden"><div class="t" style="left:16px;top:17.7px;font-size:21.2px;font-weight:700;color:#b8b8b8;">Adjustments</div></div>
<div class="t" style="left:2513px;top:910.7px;font-size:21.1px;font-weight:700;color:#b8b8b8;">Libraries</div>
<div class="t" style="left:2624px;top:911.5px;font-size:20.2px;font-weight:700;color:#b8b8b8;">Paths</div>
<div class="t" style="left:2702px;top:910.7px;font-size:21.2px;font-weight:700;color:#b8b8b8;">Channels</div>
<div class="a" style="left:2246.5px;top:960.5px;width:47px;height:47px;background:#383838;border:1.5px solid #4c4c4c;border-radius:6px;box-sizing:border-box"></div>
<svg style="left:2257px;top:969px" width="26" height="30" viewBox="0 0 26 30"><path d="M3,2 h12 l7,7 v18 h-19z M15,2 v7 h7" fill="none" stroke="#dcdcdc" stroke-width="2.2"/></svg>
<div class="t" style="left:2302px;top:976.2px;font-size:21.4px;color:#dcdcdc;">Document</div>
<div class="a" style="left:2226px;top:1016px;width:562px;height:2px;background:#3c3c3c;"></div>
<svg style="left:2238px;top:1042px" width="20" height="13" viewBox="0 0 20 13"><path d="M2,2 L10.0,11 L18,2" fill="none" stroke="#dcdcdc" stroke-width="2"/></svg>
<div class="t" style="left:2268px;top:1038.5px;font-size:20.7px;font-weight:700;color:#f0f0f0;">Canvas</div>
<div class="t" style="left:2326.6px;top:1086.6px;font-size:18.8px;color:#d0d0d0;">W</div>
<div class="a" style="left:2354.5px;top:1078.5px;width:107px;height:33px;background:#3c3c3c;border:1.5px solid #626262;box-sizing:border-box"></div>
<div class="t" style="left:2362.6px;top:1084.0px;font-size:21.9px;color:#f0f0f0;">3934 px</div>
<div class="t" style="left:2488px;top:1085.6px;font-size:20px;color:#d0d0d0;">X</div>
<div class="a" style="left:2511.5px;top:1078.5px;width:107px;height:33px;background:#4c4c4c;border:1.5px solid #626262;box-sizing:border-box"></div>
<div class="t" style="left:2519.6px;top:1084.0px;font-size:21.9px;color:#7a7a7a;">0 px</div>
<div class="t" style="left:2331.5px;top:1133.8px;font-size:19.5px;color:#d0d0d0;">H</div>
<div class="a" style="left:2354.5px;top:1126.5px;width:107px;height:33px;background:#3c3c3c;border:1.5px solid #626262;box-sizing:border-box"></div>
<div class="t" style="left:2362.6px;top:1131.8px;font-size:21.9px;color:#f0f0f0;">2861 px</div>
<div class="t" style="left:2488px;top:1133.4px;font-size:20px;color:#d0d0d0;">Y</div>
<div class="a" style="left:2511.5px;top:1126.5px;width:107px;height:33px;background:#4c4c4c;border:1.5px solid #626262;box-sizing:border-box"></div>
<div class="t" style="left:2519.6px;top:1131.8px;font-size:21.9px;color:#7a7a7a;">0 px</div>
<svg style="left:2262px;top:1102px" width="20" height="34" viewBox="0 0 20 34"><g fill="none" stroke="#dcdcdc" stroke-width="2.4"><rect x="4" y="2" width="11" height="14" rx="5.5"/><rect x="4" y="17" width="11" height="14" rx="5.5"/><path d="M9.5,10 v14"/></g></svg>
<svg style="left:2366px;top:1188px" width="32" height="36" viewBox="0 0 32 36"><rect x="2" y="2" width="27" height="31" fill="none" stroke="#dcdcdc" stroke-width="2"/><circle cx="15.5" cy="10" r="3.4" fill="#dcdcdc"/><path d="M9,31 v-11 a4,4 0 0 1 4,-4 h5 a4,4 0 0 1 4,4 v11z" fill="#dcdcdc"/></svg>
<div class="a" style="left:2408.5px;top:1181px;width:51px;height:50px;background:#383838;border:1.5px solid #4c4c4c;border-radius:6px;box-sizing:border-box"></div>
<svg style="left:2417px;top:1193px" width="36" height="28" viewBox="0 0 36 28"><rect x="2" y="2" width="30" height="23" fill="none" stroke="#dcdcdc" stroke-width="2"/><circle cx="17" cy="9" r="3.4" fill="#dcdcdc"/><path d="M9,24 v-4 a5,5 0 0 1 5,-5 h6 a5,5 0 0 1 5,5 v4z" fill="#dcdcdc"/></svg>
<div class="t" style="left:2356.6px;top:1253.6px;font-size:21.7px;color:#d0d0d0;">Resolution: 300 pixels/inch</div>
<div class="t" style="left:2291px;top:1305.9px;font-size:21.1px;color:#d0d0d0;">Mode</div>
<div class="a" style="left:2356px;top:1298.7px;width:263px;height:36px;background:#424242;border:1.5px solid #636363;border-radius:6px;box-sizing:border-box"></div>
<div class="t" style="left:2371.6px;top:1306.5px;font-size:20.4px;color:#f0f0f0;">RGB Color</div>
<svg style="left:2595.5px;top:1311px" width="17" height="11" viewBox="0 0 17 11"><path d="M2,2 L8.5,9 L15,2" fill="none" stroke="#e0e0e0" stroke-width="2"/></svg>
<div class="a" style="left:2356px;top:1350.5px;width:263px;height:36px;background:#424242;border:1.5px solid #636363;border-radius:6px;box-sizing:border-box"></div>
<div class="t" style="left:2371.6px;top:1357.7px;font-size:21.3px;color:#f0f0f0;">8 Bits/Channel</div>
<svg style="left:2595.5px;top:1363px" width="17" height="11" viewBox="0 0 17 11"><path d="M2,2 L8.5,9 L15,2" fill="none" stroke="#e0e0e0" stroke-width="2"/></svg>
<div class="t" style="left:2318.4px;top:1416.2px;font-size:19.9px;color:#d0d0d0;">Fill</div>
<div class="a" style="left:2355px;top:1409px;width:36px;height:35px;background:#2a2a2a;"></div>
<div class="a" style="left:2357px;top:1411px;width:32px;height:31px;background:#ffffff;"></div>
<div class="a" style="left:2400px;top:1409px;width:219px;height:35px;background:#424242;border:1.5px solid #636363;border-radius:6px;box-sizing:border-box"></div>
<div class="t" style="left:2416px;top:1415.1px;font-size:21.1px;color:#f0f0f0;">White</div>
<svg style="left:2595.5px;top:1422px" width="17" height="11" viewBox="0 0 17 11"><path d="M2,2 L8.5,9 L15,2" fill="none" stroke="#e0e0e0" stroke-width="2"/></svg>
<div class="a" style="left:2226px;top:1466px;width:562px;height:2px;background:#3c3c3c;"></div>
<svg style="left:2238px;top:1493px" width="20" height="13" viewBox="0 0 20 13"><path d="M2,2 L10.0,11 L18,2" fill="none" stroke="#dcdcdc" stroke-width="2"/></svg>
<div class="t" style="left:2268px;top:1488.4px;font-size:20.85px;font-weight:700;color:#f0f0f0;">Rulers &amp; Grids</div>
<svg style="left:2254px;top:1537px" width="36" height="36" viewBox="0 0 36 36"><g fill="#dcdcdc"><path d="M2,2 h32 v6 h-26 v26 h-6z"/></g><g fill="#535353"><rect x="12" y="4" width="2" height="2"/><rect x="17" y="4" width="2" height="2"/><rect x="22" y="4" width="2" height="2"/><rect x="27" y="4" width="2" height="2"/><rect x="4" y="12" width="2" height="2"/><rect x="4" y="17" width="2" height="2"/><rect x="4" y="22" width="2" height="2"/><rect x="4" y="27" width="2" height="2"/></g></svg>
<svg style="left:2320px;top:1537px" width="36" height="36" viewBox="0 0 36 36"><g fill="none" stroke="#dcdcdc" stroke-width="2"><rect x="2" y="2" width="31" height="31"/><path d="M12.3,2 v31 M22.6,2 v31 M2,12.3 h31 M2,22.6 h31"/></g></svg>
<svg style="left:2386px;top:1537px" width="36" height="36" viewBox="0 0 36 36"><rect x="2" y="2" width="31" height="31" fill="#858585" stroke="#dcdcdc" stroke-width="2"/><g fill="#5e5e5e"><rect x="3" y="3" width="7.5" height="7.5"/><rect x="18" y="3" width="7.5" height="7.5"/><rect x="10.5" y="10.5" width="7.5" height="7.5"/><rect x="25.5" y="10.5" width="7.5" height="7.5"/><rect x="3" y="18" width="7.5" height="7.5"/><rect x="18" y="18" width="7.5" height="7.5"/><rect x="10.5" y="25.5" width="7.5" height="7.5"/><rect x="25.5" y="25.5" width="7.5" height="7.5"/></g></svg>
<div class="a" style="left:2466.5px;top:1537px;width:152px;height:36px;background:#424242;border:1.5px solid #636363;border-radius:6px;box-sizing:border-box"></div>
<div class="t" style="left:2481.7px;top:1544.0px;font-size:20.5px;color:#f0f0f0;">Pixels</div>
<svg style="left:2595.5px;top:1550px" width="17" height="11" viewBox="0 0 17 11"><path d="M2,2 L8.5,9 L15,2" fill="none" stroke="#e0e0e0" stroke-width="2"/></svg>
<!--/RIGHT-->
</body></html>
